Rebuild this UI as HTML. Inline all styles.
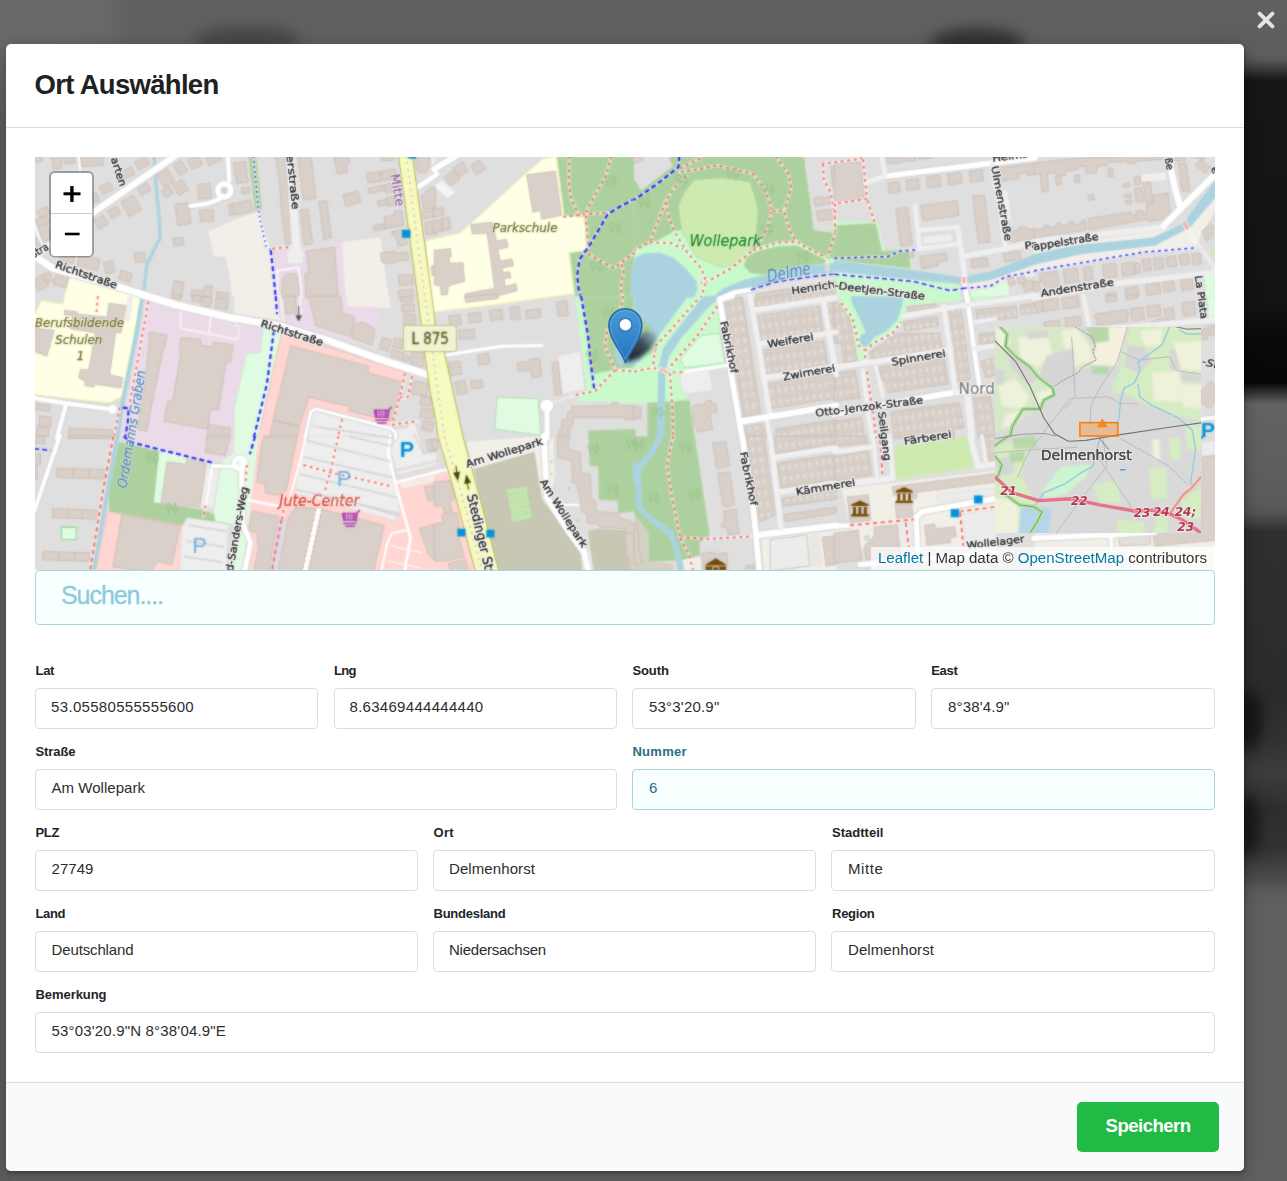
<!DOCTYPE html>
<html lang="de"><head><meta charset="utf-8"><title>Ort Auswählen</title>
<style>
html,body{margin:0;padding:0}
body{width:1287px;height:1181px;overflow:hidden;position:relative;background:#606060;font-family:"Liberation Sans",sans-serif}
.t{margin:0;padding:0;display:block;position:absolute;white-space:pre;font-family:"Liberation Sans",sans-serif}
.modal{position:absolute;left:6px;top:44px;width:1238px;height:1127px;background:#fff;border-radius:5px;box-shadow:1px 3px 3px 0 rgba(0,0,0,.2),1px 3px 15px 2px rgba(0,0,0,.2);overflow:hidden}
.hdr{position:absolute;left:0;top:0;right:0;height:83px;border-bottom:1px solid #dcdddd}
.actions{position:absolute;left:0;right:0;top:1038px;bottom:0;background:#f9fafb;border-top:1px solid #dcdddd}
.map{position:absolute;left:35px;top:157px;width:1180px;height:413px;overflow:hidden;background:#e0dfdf}
.search{position:absolute;left:35px;top:570px;width:1180px;height:55px;box-sizing:border-box;border:1px solid #a9d5de;border-radius:4px;background:#f8ffff}
.in{position:absolute;box-sizing:border-box;border:1px solid #dcdddd;border-radius:4px;background:#fff}
.in.info{border-color:#a9d5de;background:#f8ffff}
.btn{position:absolute;left:1077px;top:1102px;width:142px;height:50px;border-radius:5px;background:#21ba45}
.attr{position:absolute;right:0;bottom:0;height:23px;line-height:22px;padding:0 8px 0 6.8px;background:rgba(255,255,255,.7);font-size:15.07px;color:#333;white-space:nowrap}
.attr .lk{color:#0078a8}
.bgl{position:absolute;left:0;top:0;width:130px;height:120px;background:linear-gradient(90deg,#696969 0,#686868 80%,#606060 100%);-webkit-mask-image:linear-gradient(180deg,#000 0,#000 40%,transparent 100%);mask-image:linear-gradient(180deg,#000 0,#000 40%,transparent 100%)}
.bgl2{position:absolute;left:0;top:40px;width:12px;height:1141px;background:linear-gradient(180deg,rgba(92,92,92,0) 0,#5c5c5c 80px)}
.bgr{position:absolute;left:1200px;top:0;width:87px;height:1181px;background:linear-gradient(180deg,#606060 0,#5e5e5e 4.6%,#565656 5.1%,#161616 6.8%,#131313 26%,#0a0a0a 28.5%,#070707 32.4%,#3a3a3a 33.4%,#636363 34.2%,#5c5c5c 42%,#555 43.4%,#2f2f2d 45%,#2b2b29 59%,#333331 63%,#3c3c3a 65.5%,#2e2e2c 68.5%,#333 72%,#4a4a4a 74.3%,#5c5c5c 75.6%,#606060 77%,#606060 100%)}
.blob{position:absolute;border-radius:50%;filter:blur(7px)}
.cls{position:absolute;left:1254.5px;top:9px}

</style></head>
<body>
<div class="bgl"></div><div class="bgl2"></div>
<div class="bgr"></div>
<div class="blob" style="left:195px;top:26px;width:105px;height:30px;background:#474747"></div>
<div class="blob" style="left:930px;top:28px;width:95px;height:30px;background:#333"></div>
<div class="blob" style="left:1236px;top:690px;width:26px;height:60px;background:#151515"></div>
<div class="blob" style="left:1236px;top:795px;width:24px;height:60px;background:#181818"></div>
<svg class="cls" width="22" height="22" viewBox="0 0 22 22"><path d="M4.6 4.6l12.8 12.8M17.4 4.6L4.6 17.4" stroke="#e4e4e4" stroke-width="3.9" stroke-linecap="round" fill="none"/></svg>

<div class="modal">
<div class="hdr"></div>
<div class="actions"></div>
</div>
<div class="map">
<svg width="1180" height="413" viewBox="0 0 1180 413"><style>
.b{fill:#d9d0c9;stroke:#c6b9ae;stroke-width:.8}
.res{fill:#e0dfdf}
.bb{fill:url(#rows);stroke:#c6b9ae;stroke-width:.8}
.beige{fill:#f2efe9}
.ind{fill:#ebdbe8}
.sch{fill:#ffffe5;stroke:#f3f0a8;stroke-width:1}
.ret{fill:#ffd6d1;stroke:#efb9b3;stroke-width:.8}
.park{fill:#c8facc}
.gr2{fill:#dffce2;stroke:#bfe9c4;stroke-width:.6}
.wood{fill:#add19e}
.grass{fill:#cdebb0}
.brown{fill:#c7c7b4}
.pk{fill:#eeeeee;stroke:#dcd6d6;stroke-width:.6}
.wa{fill:#aad3df}
.st{fill:none;stroke:#aad3df;stroke-linecap:round;stroke-linejoin:round}
.rd{fill:none;stroke:#fff;stroke-linecap:round;stroke-linejoin:round}
.rc{fill:none;stroke:#cfcdcd;stroke-linecap:round;stroke-linejoin:round}
.sv{fill:none;stroke:#f0efef;stroke-linecap:round;stroke-linejoin:round}
.pc{fill:none;stroke:#fff;stroke-opacity:.42;stroke-width:3.6;stroke-linecap:round;stroke-linejoin:round}
.fp{fill:none;stroke:#f46a5d;stroke-width:1.9;stroke-dasharray:2.8 3.8;stroke-linejoin:round}
.cy{fill:none;stroke:#1a1af2;stroke-width:1.5;stroke-dasharray:5 3;stroke-linejoin:round}
.cyd{fill:none;stroke:#2222f5;stroke-width:1.5;stroke-dasharray:1.6 3.4;stroke-linejoin:round}
text{font-family:"DejaVu Sans","Liberation Sans",sans-serif}
.rl{fill:#1c1c1c;stroke:#1c1c1c;stroke-width:.4}
.rl-h{fill:none;stroke:#fff;stroke-width:2.6;stroke-linejoin:round;stroke-opacity:.9}
.wl{fill:#4d80b3;font-style:italic;stroke:#4d80b3;stroke-width:.25}
.wl-h{fill:none;font-style:italic;stroke:#fff;stroke-width:1.8;stroke-opacity:.55;stroke-linejoin:round}
.gl{fill:#0e8517;font-style:italic;stroke:#0e8517;stroke-width:.25}
.gl-h{fill:none;font-style:italic;stroke:#fff;stroke-width:1.8;stroke-opacity:.45;stroke-linejoin:round}
.sl{fill:#6b6b1c;font-style:italic;stroke:#6b6b1c;stroke-width:.25}
.sl-h{fill:none;font-style:italic;stroke:#fff;stroke-width:1.8;stroke-opacity:.55;stroke-linejoin:round}
.shl{fill:#d9453a;font-style:italic;stroke:#d9453a;stroke-width:.3}
.shl-h{fill:none;font-style:italic;stroke:#fff;stroke-width:1.8;stroke-opacity:.5;stroke-linejoin:round}
.pl{fill:#777;stroke:#777;stroke-width:.2}
.pl-h{fill:none;stroke:#fff;stroke-width:2.2;stroke-opacity:.7;stroke-linejoin:round}
.dl{fill:#8d5b93;stroke:#8d5b93;stroke-width:.2}
.dl-h{fill:none;stroke:#fff;stroke-width:1.8;stroke-opacity:.55;stroke-linejoin:round}
.Pk{fill:#0092da;font-family:"Liberation Sans",sans-serif;font-weight:bold}
.yr{fill:#f7fabf;stroke:#a9ad45;stroke-width:.9}
.yd{fill:none;stroke:#c4addb;stroke-width:1.6;stroke-dasharray:1.6 5}
.bus{fill:#0092da}
.brg{fill:#f4b3a8;stroke:#fff;stroke-width:.8}
.gd{fill:#9bd98f}
.tree{fill:none;stroke:#96c085;stroke-width:.9}
</style><defs><filter id="soft" x="0" y="0" width="1180" height="413" filterUnits="userSpaceOnUse" color-interpolation-filters="sRGB"><feGaussianBlur stdDeviation=".8" result="b"/><feComposite in="SourceGraphic" in2="b" operator="arithmetic" k1="0" k2=".4" k3=".6" k4="0"/></filter><filter id="soft2" x="0" y="0" width="1180" height="413" filterUnits="userSpaceOnUse" color-interpolation-filters="sRGB"><feGaussianBlur stdDeviation=".8" result="b"/><feComposite in="SourceGraphic" in2="b" operator="arithmetic" k1="0" k2=".5" k3=".5" k4="0"/></filter><pattern id="rows" width="6.8" height="11" patternUnits="userSpaceOnUse" patternTransform="rotate(-8)"><rect width="6.8" height="11" fill="#d9d0c9"/><path d="M0 0v11M0 0h6.8" stroke="#cbbfb4" stroke-width=".7" fill="none"/><rect x="2.2" y="3.5" width="3" height="3" fill="#e3e0dd"/></pattern></defs>
<g id="L-land" filter="url(#soft)"><polygon class="beige" points="173.3,74.6 200.5,62.2 200.5,140.0 197.4,140.0 194.3,118.1 190.4,99.5 178.7,99.5"/>
<polygon class="sch" points="35.0,119.6 29.5,139.2 28.0,147.0 6.2,143.9 -0.8,158.6 -0.8,237.9 74.6,245.7 87.0,239.5 107.2,139.2 96.3,136.7"/>
<polygon class="ind" points="111.1,139.2 200.5,165.6 200.5,280.6 85.5,280.6 90.1,248.8 96.3,220.8 104.1,178.9"/>
<polygon class="ind" points="93.2,279.2 200.5,279.2 200.5,304.9 177.2,305.6 93.2,286.2"/>
<polygon class="wood" points="83.9,284.7 124.3,294.0 119.7,345.3 169.4,353.0 194.3,364.7 192.7,367.0 152.3,369.4 74.6,354.6 73.0,331.3"/>
<polygon class="gr2" points="124.3,294.0 177.2,306.4 170.9,349.9 118.9,345.3" style="stroke:none"/>
<polygon class="gr2" points="186.5,304.9 200.5,295.5 200.5,367.0 180.3,364.7 178.7,353.0" style="stroke:none"/>
<polygon class="ret" points="73.0,354.6 152.3,369.4 144.5,415.2 59.1,415.2"/>
<polygon class="beige" points="199.2,62.5 223.3,54.7 235.0,91.7 238.1,108.8 240.7,140.0 199.2,140.0"/>
<polygon class="wood" points="213.2,-0.8 221.0,-0.8 227.2,52.1 220.2,54.1"/>
<polygon class="ind" points="240.7,95.1 268.4,91.7 307.2,85.2 310.6,140.6 240.7,140.6"/>
<polygon class="beige" points="307.2,85.2 345.3,80.0 353.8,140.6 310.6,140.6"/>
<polygon class="beige" points="199.2,139.2 241.2,139.2 245.1,163.3 199.2,157.1"/>
<polygon class="ind" points="245.1,139.2 345.3,139.2 343.0,163.3 339.9,191.3 245.1,164.9"/>
<polygon class="beige" points="311.1,139.2 354.6,139.2 355.4,150.9 312.7,149.3"/>
<polygon class="ind" points="199.2,164.9 228.0,171.1 225.6,195.9 211.7,196.7 199.2,248.8"/>
<polygon class="gr2" points="228.0,171.1 246.6,175.0 223.3,281.4 199.2,281.4 199.2,251.9 211.7,196.7 225.6,195.9"/>
<polygon class="ret" points="246.6,175.0 369.4,214.6 358.5,267.4 355.4,281.4 223.3,281.4"/>
<polygon class="ret" points="199.2,279.2 401.2,279.2 401.2,415.2 199.2,415.2" style="stroke:none"/>
<polygon class="gr2" points="199.2,279.2 223.3,279.2 210.9,388.8 207.8,415.2 199.2,415.2" style="stroke:none"/>
<polygon class="beige" points="363.9,326.6 401.2,318.1 401.2,323.8 367.8,331.6"/>
<polygon class="res" points="356.2,265.2 403.6,265.2 403.6,315.0 362.4,325.1 353.8,297.1 355.4,279.2"/>
<polygon class="wood" points="521.2,-0.8 605.1,-0.8 605.1,146.1 540.6,146.1 534.4,95.6 551.5,93.2 549.2,60.6 529.0,61.4 524.3,23.3" style="stroke:#c8facc;stroke-width:1.2"/>
<polygon class="sch" points="390.7,83.9 424.9,76.1 435.7,66.8 490.1,17.1 508.8,1.6 521.2,-0.8 524.3,23.3 529.0,59.4 549.2,60.0 551.5,93.2 533.6,95.6 539.1,136.8 519.7,139.2 465.3,147.0 395.3,155.4"/>
<polygon class="park" points="540.6,139.2 600.5,139.2 600.5,245.7 543.0,244.1 543.7,239.5 551.5,231.7 546.1,191.3"/>
<polygon class="wood" points="546.1,139.2 600.5,139.2 600.5,209.9 581.0,212.3 555.4,217.7 553.1,191.3"/>
<polygon class="wood" points="553.1,273.6 600.5,272.1 600.5,281.4 553.1,281.4"/>
<polygon class="ret" points="399.2,317.3 415.5,315.0 442.0,415.2 399.2,415.2" style="stroke:none"/>
<polygon class="beige" points="431.9,284.7 507.2,279.2 508.8,295.5 518.1,279.2 519.7,318.9 515.0,340.6 536.8,373.2 555.4,395.0 558.5,415.2 546.1,415.2 507.2,342.2 499.5,294.8 438.9,311.9 435.0,300.2"/>
<polygon class="brown" points="438.9,311.9 499.5,294.8 507.2,342.2 533.6,376.3 546.1,398.1 547.6,415.2 463.7,415.2 443.5,335.9"/>
<polygon class="wood" points="553.8,279.2 601.2,279.2 601.2,354.6 583.4,356.1 582.6,343.7 563.9,342.9 563.2,309.5 554.6,308.7"/>
<polygon class="brown" points="553.1,373.2 564.7,371.7 590.4,373.2 595.8,415.2 558.5,415.2"/>
<polygon class="park" points="599.2,-0.8 800.5,-0.8 800.5,140.6 599.2,140.6"/>
<polygon class="wood" points="599.2,21.8 606.2,33.4 637.3,9.3 633.4,-0.8 769.4,-0.8 770.9,15.5 775.6,46.6 778.7,73.0 800.5,76.1 800.5,101.0 791.9,101.8 761.6,84.7 743.0,85.5 724.3,89.4 715.0,96.3 701.0,108.8 683.9,109.6 660.6,99.5 646.6,73.0 638.9,74.6 615.5,87.0 599.2,93.2"/>
<polygon class="wood" points="708.8,108.8 711.9,99.5 724.3,93.2 743.0,89.4 761.6,88.6 775.6,94.8 790.4,102.6 790.4,106.4 755.4,111.1 729.0,118.1 715.0,115.8"/>
<polygon class="res" points="599.2,-0.8 633.4,-0.8 637.3,9.3 606.2,33.4 599.2,21.8"/>
<polygon class="res" points="769.4,-0.8 800.5,-0.8 800.5,76.1 778.7,73.0 775.6,46.6 770.9,15.5"/>
<polygon class="res" points="715.0,132.1 739.9,124.3 770.9,118.1 800.5,115.0 800.5,140.6 699.5,140.6" style="fill:#e6e4e2"/>
<polygon class="park" points="599.2,139.2 687.0,139.2 683.9,175.7 690.1,206.8 651.3,214.6 652.8,239.5 638.9,245.7 599.2,245.7"/>
<polygon class="wood" points="612.4,245.7 654.4,243.3 659.8,281.4 612.4,281.4"/>
<polygon class="wood" points="599.2,279.2 659.8,279.2 674.6,377.9 664.5,385.7 665.3,398.1 649.7,402.8 614.0,405.1 613.2,374.8 599.2,357.7"/>
<polygon class="brown" points="599.2,357.7 613.2,374.8 614.0,405.1 637.3,405.9 638.9,415.2 599.2,415.2" style="fill:#d3d1c4"/>
<polygon class="beige" points="648.2,402.8 665.3,399.7 666.0,415.2 646.6,415.2"/>
<polygon class="beige" points="725.9,381.8 801.2,373.2 801.2,415.2 729.0,415.2"/>
<polygon class="park" points="799.2,65.3 842.7,64.5 849.4,93.2 874.6,91.7 876.9,112.7 799.2,103.8"/>
<polygon class="wood" points="799.2,68.4 840.7,66.0 846.9,94.0 873.8,92.5 875.7,111.6 799.2,102.9"/>
<polygon class="park" points="799.2,114.2 877.7,122.8 924.3,127.4 925.1,140.6 799.2,140.6"/>
<polygon class="beige" points="932.1,127.1 955.4,123.1 1000.5,107.2 1000.5,118.1 974.0,124.3 972.5,132.1 933.6,135.2"/>
<polygon class="gr2" points="935.2,135.2 973.3,125.1 974.8,138.3 935.2,141.4"/>
<polygon class="park" points="804.7,139.2 927.4,139.2 926.7,143.1 871.5,149.3 866.8,168.0 851.3,180.4 832.6,192.8 831.9,204.5 823.3,204.5 820.2,186.6 814.0,163.3 804.7,144.7"/>
<polygon class="park" points="935.2,139.2 960.1,139.2 960.1,142.3 935.5,143.4"/>
<polygon class="beige" points="807.0,332.1 960.8,313.4 960.8,391.9 799.2,391.9 799.2,367.0 814.0,366.2"/>
<polygon class="grass" points="859.1,289.3 933.6,279.2 938.3,311.1 860.6,322.7"/>
<polygon class="beige" points="999.2,88.6 1068.4,81.6 1129.0,73.0 1146.1,67.6 1118.1,80.8 1038.9,88.6 999.2,97.6"/>
<polygon class="beige" points="999.2,107.2 1046.6,97.1 1119.7,88.6 1155.4,69.9 1181.0,39.6 1181.0,52.8 1158.5,91.7 1108.8,94.8 999.2,113.8"/>
<polygon class="gr2" points="1169.4,118.1 1181.0,117.3 1181.0,140.6 1170.9,140.6"/>
<polygon class="grass" points="1174.0,91.7 1181.0,89.4 1181.0,103.3"/>
<polygon class="gr2" points="1172.5,139.2 1181.0,139.2 1181.0,160.2 1173.3,160.5"/>
<polygon class="beige" points="999.2,311.1 1181.0,303.3 1181.0,415.2 999.2,415.2"/></g>
<g id="L-land2" filter="url(#soft)"><polygon class="pk" points="93.4,139.8 97.3,140.4 94.0,163.5 90.2,162.9"/>
<polygon class="pk" points="152.3,360.8 193.5,367.0 191.1,415.2 144.5,415.2 146.9,370.1"/>
<polygon class="pk" points="168.6,308.7 184.9,310.3 178.7,351.5 164.7,349.9"/>
<polygon class="gr2" points="26.4,370.1 41.2,370.4 41.2,382.6 26.4,382.3" style="stroke:#8fd49a;stroke-width:1.1"/>
<polygon class="pk" points="252.1,92.0 268.4,91.4 268.7,106.4 252.5,106.9"/>
<polygon class="pk" points="395.0,-0.8 400.5,-0.8 400.5,7.8 396.1,7.0"/>
<polygon class="pk" points="277.7,251.1 358.5,272.1 357.0,281.4 268.4,281.4 273.0,255.0"/>
<polygon class="pk" points="270.7,279.2 355.4,279.2 360.1,323.5 364.7,354.6 360.1,363.9 259.1,335.9 265.3,303.3"/>
<polygon class="pk" points="360.4,271.8 372.3,270.8 373.9,266.6 380.0,265.4 389.3,297.2 401.9,295.1 402.6,308.1 362.9,318.4 356.2,295.5" style="stroke:#ecc4bf"/>
<polygon class="pk" points="244.3,360.8 252.8,362.1 242.0,415.2 233.4,415.2" style="fill:#dcdce8;stroke:none"/>
<polygon class="pk" points="400.0,27.2 407.0,23.3 421.0,35.0 412.4,41.2 400.0,31.1" style="fill:#f4f3f3"/>
<polygon class="gr2" points="462.2,240.2 503.3,241.8 505.7,278.3 459.8,272.1" style="stroke:#a8dcae;stroke-width:.9"/>
<polygon class="pk" points="522.8,198.3 545.3,194.4 550.0,232.5 527.4,237.1" style="stroke:#e3cfcb"/>
<polygon class="grass" points="471.5,332.8 491.7,329.0 497.1,360.8 477.7,365.5" style="fill:#c4e5ae"/>
<polygon class="grass" points="659.1,23.3 687.0,21.0 715.0,25.6 722.8,51.3 721.2,74.6 715.0,96.3 701.0,108.8 683.9,109.6 660.6,99.5 646.6,73.0 643.5,48.2 649.7,35.7"/>
<polygon class="gr2" points="645.1,202.2 665.3,178.9 684.7,176.1 690.1,206.0 649.7,210.7" style="stroke:#a8dcae;stroke-width:.9"/>
<polygon class="pk" points="644.3,216.1 674.6,213.0 677.7,233.2 652.8,237.1 646.6,233.2" style="stroke:#e3cfcb"/>
<polygon class="pk" points="735.2,382.6 771.7,377.9 774.8,409.0 735.2,414.0" style="fill:#ececec;stroke:#c4bcb6;stroke-width:.9"/>
<polygon class="pk" points="774.0,378.2 784.9,377.1 787.3,409.8 776.4,410.8" style="fill:#e9e7e4;stroke:none"/>
<polygon class="pk" points="965.1,34.0 972.5,33.0 976.7,63.0 969.4,64.0"/>
<polygon class="pk" points="887.5,79.4 916.8,76.3 917.7,84.4 888.3,87.5"/>
<polygon class="pk" points="901.8,337.5 960.8,331.3 960.8,339.8 902.6,344.5" style="fill:#ececec"/>
<polygon class="pk" points="926.7,356.9 960.8,353.0 960.8,387.2 929.8,388.8" style="fill:#ececec"/>
<polygon class="pk" points="860.9,365.2 880.0,363.9 881.1,391.9 863.7,392.7" style="fill:#ececec"/>
<polygon class="pk" points="1097.1,17.9 1131.3,14.8 1132.1,23.3 1107.2,25.6 1105.7,20.2 1097.9,21.0" style="fill:#f0efef"/>
<polygon class="pk" points="1166.3,284.7 1181.0,283.9 1181.0,298.3 1166.6,299.3" style="fill:#ececec"/></g>
<g id="L-water" filter="url(#soft)"><polyline class="st" points="118.9,-1.6 120.4,20.2 124.3,62.2 125.1,80.8 111.9,107.2 108.8,133.6 107.2,141.4" stroke-width="3.42"/>
<polyline class="st" points="107.5,139.2 101.0,178.9 93.2,217.7 87.0,248.8 82.1,281.4" stroke-width="4.04" style="stroke-linecap:butt"/>
<polyline class="st" points="82.4,279.2 73.0,331.3 58.7,415.2" stroke-width="4.04" style="stroke-linecap:butt"/>
<polygon class="wa" points="596.6,108.8 600.5,101.0 600.5,140.6 595.0,140.6"/>
<polygon class="wa" points="578.7,191.3 600.5,191.3 600.5,208.4 583.4,208.4"/>
<polygon class="wa" points="597.4,304.9 601.2,303.3 601.2,328.2 598.1,326.6"/>
<polygon class="wa" points="599.2,101.0 609.3,96.3 624.9,95.6 638.9,101.0 651.3,111.9 661.4,124.3 662.2,133.6 659.1,140.6 599.2,140.6"/>
<polygon class="wa" points="677.7,140.6 687.0,132.1 708.8,122.8 739.9,115.8 770.9,108.8 800.5,105.7 800.5,115.0 770.9,118.1 739.9,124.3 715.0,132.1 699.5,140.6"/>
<polygon class="wa" points="599.2,139.2 652.8,139.2 620.2,183.5 612.4,191.3 606.2,202.2 599.2,208.4"/>
<polygon class="wa" points="668.4,139.2 651.3,160.2 628.0,191.3 623.3,211.5 621.8,281.4 629.5,281.4 630.3,214.6 634.2,199.1 646.6,180.4 674.6,149.3 687.0,139.2"/>
<polyline class="st" points="625.6,279.2 617.1,295.5 603.1,311.1 603.9,348.4 609.3,356.1 635.7,376.3 640.4,388.8 646.9,415.2" stroke-width="6.22" style="stroke-linecap:butt;stroke-linejoin:miter"/>
<polygon class="wa" points="799.2,103.2 876.1,112.7 924.3,120.0 955.4,114.7 1000.5,97.1 1000.5,107.2 955.4,123.1 929.0,127.1 877.7,122.8 799.2,114.2"/>
<polygon class="wa" points="815.5,139.2 868.4,139.2 866.8,149.3 862.2,163.3 851.3,174.2 838.9,180.4 832.6,189.7 827.2,189.7 824.1,183.5 826.4,177.3 831.1,175.7 823.3,158.6 817.1,146.2"/>
<polygon class="wa" points="999.2,97.3 1038.9,88.6 1118.1,80.8 1147.6,66.8 1170.9,35.7 1181.0,22.5 1181.0,39.6 1155.4,69.9 1119.7,88.6 1046.6,97.1 999.2,107.4"/></g>
<g id="L-bldg" filter="url(#soft)"><polygon class="b" points="-1.2,0.3 6.5,-1.0 7.4,4.3 -0.2,5.7"/>
<polygon class="b" points="17.0,-0.4 25.5,-1.1 26.6,11.3 18.0,12.0"/>
<polygon class="b" points="28.4,-0.6 39.3,-1.5 39.9,6.2 29.1,7.1"/>
<polygon class="b" points="45.9,-0.6 67.6,-1.7 68.2,8.4 46.4,9.5"/>
<polygon class="b" points="85.7,14.4 96.2,9.5 99.9,17.3 89.3,22.2"/>
<polygon class="b" points="99.5,5.0 110.7,-0.3 114.4,7.5 103.1,12.7"/>
<polygon class="b" points="64.1,30.0 74.6,25.1 78.3,32.8 67.7,37.7"/>
<polygon class="b" points="54.7,38.0 61.0,35.0 65.0,43.5 58.6,46.4"/>
<polygon class="b" points="102.2,31.3 111.7,25.9 115.9,33.3 106.5,38.7"/>
<polygon class="b" points="86.0,45.0 98.1,38.1 106.7,52.9 94.6,59.8"/>
<polygon class="b" points="72.7,54.3 81.5,49.3 85.8,56.7 77.0,61.7"/>
<polygon class="b" points="58.8,63.6 68.2,58.2 73.3,66.9 63.9,72.4"/>
<polygon class="b" points="122.1,17.5 132.2,11.7 139.6,24.5 129.5,30.3"/>
<polygon class="b" points="138.2,7.8 146.2,3.2 152.4,13.9 144.4,18.6"/>
<polygon class="b" points="126.4,33.9 134.5,29.3 138.4,36.0 130.3,40.7"/>
<polygon class="b" points="137.5,27.6 146.9,22.2 153.1,33.0 143.7,38.4"/>
<polygon class="b" points="152.6,3.3 163.2,-1.6 167.5,7.6 156.9,12.5"/>
<polygon class="b" points="171.1,1.6 183.1,-4.0 186.3,3.1 174.4,8.6"/>
<polygon class="b" points="162.6,27.4 174.9,26.3 176.2,41.0 163.8,42.1"/>
<polygon class="b" points="139.9,47.7 153.0,45.9 155.9,66.7 142.9,68.5"/>
<polygon class="b" points="164.6,53.4 177.8,52.2 178.8,63.8 165.6,65.0"/>
<polygon class="b" points="193.8,47.3 201.5,46.6 202.5,57.4 194.7,58.1"/>
<polygon class="b" points="137.9,81.5 147.9,80.1 149.0,87.8 139.0,89.2"/>
<polygon class="b" points="99.3,96.0 109.4,95.1 110.2,104.7 100.1,105.6"/>
<polygon class="b" points="1.9,54.5 11.3,49.1 15.2,55.8 5.8,61.3"/>
<polygon class="b" points="0.8,63.0 11.4,58.0 14.7,65.1 4.1,70.0"/>
<polygon class="b" points="3.1,69.7 11.8,66.5 17.1,81.1 8.4,84.3"/>
<polygon class="b" points="-3.0,82.2 2.9,80.0 6.1,88.8 0.2,90.9"/>
<polygon class="b" points="44.5,98.2 65.0,102.5 62.7,113.2 42.2,108.8"/>
<polygon class="b" points="68.7,105.6 77.5,103.7 79.9,115.1 71.1,117.0"/>
<polygon class="b" points="86.3,113.1 97.4,116.7 94.5,125.6 83.5,122.0"/>
<polygon class="b" points="25.6,97.1 39.4,99.6 38.1,106.4 24.4,104.0"/>
<polygon class="b" points="-3.1,123.6 7.7,117.4 13.9,128.1 3.2,134.4"/>
<polygon class="b" points="7.8,118.1 13.9,114.6 18.6,122.7 12.5,126.2"/>
<polygon class="b" points="21.8,114.8 33.8,118.0 30.4,130.8 18.4,127.5"/>
<polygon class="b" points="139.0,123.7 149.1,125.1 146.9,140.5 136.9,139.1"/>
<polygon class="b" points="156.5,132.8 167.3,133.7 166.7,140.7 155.9,139.8"/>
<polygon class="b" points="169.6,128.7 177.3,129.3 176.4,140.2 168.6,139.5"/>
<polygon class="b" points="181.7,134.8 193.3,135.8 192.8,141.2 181.2,140.2"/>
<polygon class="b" points="29.5,153.2 42.0,154.8 42.7,157.1 72.3,160.2 73.8,146.2 90.9,148.5 86.2,175.7 80.8,175.4 74.6,217.7 87.8,220.8 86.2,230.9 59.8,227.0 59.1,230.1 49.7,228.6 50.5,224.7 43.5,220.8 45.8,212.3 53.6,213.0 60.6,175.7 35.7,171.9 37.3,158.6 29.5,157.9"/>
<polygon class="b" points="-0.8,171.1 19.4,173.4 11.7,199.1 -0.8,194.4"/>
<polygon class="b" points="114.2,175.0 132.1,178.1 129.8,189.7 129.0,188.2 119.7,233.2 118.9,235.6 111.9,274.4 102.6,272.1 108.8,233.2 114.2,186.6"/>
<polygon class="b" points="146.1,180.4 165.5,182.7 166.3,188.2 177.9,189.7 178.7,185.1 198.1,188.2 195.0,205.3 191.1,205.0 183.4,253.4 175.6,252.7 172.5,272.1 129.0,264.3 132.9,244.1 137.5,244.9 146.1,194.4 144.5,193.6"/>
<polygon class="b" points="174.0,267.4 195.8,271.3 194.3,281.4 171.7,281.4"/>
<polygon class="b" points="34.2,271.3 77.7,272.9 76.9,281.4 33.4,281.4"/>
<polygon class="b" points="137.2,137.3 146.3,138.9 145.7,142.7 136.5,141.1"/>
<polygon class="b" points="157.6,137.7 166.7,139.3 165.7,145.4 156.5,143.8"/>
<polygon class="b" points="167.9,139.3 177.1,140.9 175.5,150.1 166.3,148.4"/>
<polygon class="b" points="181.2,141.3 193.4,143.5 191.8,152.7 179.5,150.5"/>
<polygon class="b" points="1.4,247.1 15.3,248.3 14.8,254.2 0.9,253.0"/>
<polygon class="b" points="4.7,258.8 16.3,259.8 15.5,269.9 3.9,268.8"/>
<polygon class="b" points="2.4,269.3 14.0,270.3 13.2,279.6 1.6,278.6"/>
<polygon class="b" points="172.5,279.2 195.0,279.2 190.4,298.6 170.2,295.5"/>
<polygon class="b" points="132.1,304.9 151.5,307.2 152.0,301.8 171.7,304.1 164.7,349.9 153.8,348.4 153.1,350.7 125.9,346.0"/>
<polygon class="b" points="87.0,357.7 145.3,368.6 136.8,407.4 122.8,404.3 115.0,415.2 77.7,409.8"/>
<polygon class="b" points="33.4,278.8 77.7,279.2 77.4,281.6 33.4,281.2"/>
<polygon class="b" points="21.9,311.0 70.1,312.7 69.8,322.0 21.6,320.3"/>
<polygon class="b" points="17.6,351.6 62.3,353.2 62.0,362.2 17.3,360.6"/>
<polygon class="b" points="7.9,394.3 54.5,395.9 54.2,404.4 7.6,402.8"/>
<polygon class="b" points="-0.8,279.6 10.1,279.6 10.1,286.6 -0.8,286.6"/>
<polygon class="b" points="-2.3,297.1 5.4,297.1 5.4,308.0 -2.3,308.0"/>
<polygon class="b" points="-2.3,309.5 2.3,309.5 2.3,322.0 -2.3,322.0"/>
<polyline class="b" points="37.8,312.2 37.8,320.9"/>
<polyline class="b" points="53.6,312.2 53.6,320.9"/>
<polyline class="b" points="32.6,352.6 32.6,361.3"/>
<polyline class="b" points="47.4,352.6 47.4,361.3"/>
<polyline class="b" points="24.1,395.0 24.1,403.7"/>
<polyline class="b" points="39.6,395.0 39.6,403.7"/>
<polygon class="b" points="240.7,-0.8 250.0,-0.8 252.8,23.3 254.7,51.3 260.3,85.2 251.0,87.8 246.3,52.8 244.3,23.3"/>
<polygon class="b" points="262.9,-0.8 276.1,-0.8 281.1,41.2 268.4,43.2"/>
<polygon class="b" points="265.3,53.1 273.0,52.2 277.7,86.2 269.2,87.8"/>
<polygon class="b" points="283.9,44.8 291.7,43.8 296.3,80.8 288.6,82.1"/>
<polygon class="b" points="298.7,-0.8 314.2,-0.8 315.0,6.2 311.1,7.0 312.2,14.8 302.6,17.1"/>
<polygon class="b" points="349.2,59.8 360.1,58.3 359.3,54.4 366.3,53.6 368.6,68.4 350.0,71.5"/>
<polygon class="b" points="357.0,74.6 367.1,73.0 372.5,87.0 363.2,89.4 360.8,77.7 357.3,78.5"/>
<polygon class="b" points="345.3,96.3 360.1,94.0 360.4,96.3 372.5,94.8 373.7,102.6 360.1,104.4 359.8,106.4 346.9,105.7"/>
<polygon class="b" points="271.5,94.0 299.5,90.1 303.3,140.6 270.7,140.6 269.9,116.6 273.8,115.8"/>
<polygon class="b" points="247.4,122.8 251.3,116.9 260.6,116.6 263.7,122.8 265.3,140.6 246.6,140.6"/>
<polygon class="b" points="386.5,38.9 395.8,30.3 400.5,31.1 400.5,51.3 388.8,52.1"/>
<polygon class="b" points="380.3,-0.8 394.3,-0.8 394.3,9.3 390.4,15.5 384.1,15.5 381.0,10.9"/>
<polygon class="b" points="198.7,6.0 210.2,4.3 213.1,25.1 201.6,26.7"/>
<polygon class="b" points="206.4,30.7 214.2,30.0 214.7,36.2 207.0,36.8"/>
<polygon class="b" points="197.4,46.7 215.7,42.9 218.1,54.3 199.9,58.1"/>
<polygon class="b" points="307.8,38.0 322.9,34.0 325.9,45.3 310.9,49.3"/>
<polygon class="b" points="331.8,16.1 344.9,14.3 346.3,24.3 333.2,26.1"/>
<polygon class="b" points="346.3,14.2 360.1,12.3 361.4,21.5 347.6,23.5"/>
<polygon class="b" points="333.3,31.1 350.1,28.2 351.1,33.5 334.2,36.5"/>
<polygon class="b" points="350.2,27.3 356.3,26.4 357.5,34.9 351.4,35.7"/>
<polygon class="b" points="342.6,43.8 351.9,42.5 352.6,47.9 343.4,49.2"/>
<polygon class="b" points="351.7,40.5 357.9,39.6 359.1,48.1 352.9,49.0"/>
<polygon class="b" points="338.3,68.6 349.8,66.6 350.7,71.9 339.3,73.9"/>
<polygon class="b" points="363.5,118.7 377.5,117.4 378.3,127.5 364.4,128.7"/>
<polygon class="b" points="363.6,133.5 377.6,132.3 378.2,140.0 364.3,141.2"/>
<polygon class="b" points="346.3,-0.5 359.4,-1.7 359.9,3.0 346.7,4.1"/>
<polygon class="b" points="387.8,54.6 400.1,53.5 400.7,60.4 388.4,61.5"/>
<polygon class="b" points="390.2,65.4 400.3,64.5 401.4,76.9 391.3,77.8"/>
<polygon class="b" points="396.2,109.1 402.4,108.5 403.2,117.8 397.0,118.4"/>
<polygon class="b" points="255.9,189.0 333.6,209.2 332.9,216.1 366.3,224.7 357.0,264.3 314.2,254.2 315.0,249.6 273.8,240.2 264.5,269.0 238.1,262.8"/>
<polygon class="b" points="238.1,263.5 264.5,269.8 262.2,281.4 234.2,281.4"/>
<polygon class="b" points="249.7,139.2 260.6,139.2 261.4,156.3 250.5,157.1"/>
<polygon class="b" points="273.8,139.2 305.7,139.2 307.2,155.5 319.7,160.2 315.8,179.6 280.8,168.7 274.6,143.1"/>
<polygon class="b" points="319.7,166.4 329.0,165.6 338.3,171.1 339.9,175.7 336.8,188.2 317.3,181.2"/>
<polygon class="b" points="377.2,194.4 389.6,195.9 388.0,209.9 375.6,208.4"/>
<polygon class="b" points="347.4,180.6 356.4,183.0 353.4,194.2 344.4,191.8"/>
<polygon class="b" points="359.4,181.2 368.6,182.8 367.0,192.0 357.8,190.4"/>
<polygon class="b" points="357.3,192.5 369.3,195.7 367.5,202.5 355.5,199.3"/>
<polygon class="b" points="365.5,140.0 377.9,140.0 377.9,144.7 365.5,144.7"/>
<polygon class="b" points="367.1,147.0 379.5,147.0 379.5,154.8 367.1,154.8"/>
<polygon class="b" points="369.0,157.5 380.7,157.5 380.7,169.1 369.0,169.1"/>
<polygon class="b" points="378.4,223.8 393.7,226.5 391.4,239.5 376.1,236.8"/>
<polygon class="b" points="386.6,238.6 397.3,240.5 395.7,249.7 385.0,247.8"/>
<polygon class="b" points="386.2,250.8 399.2,253.1 397.6,262.3 384.6,260.0"/>
<polygon class="b" points="388.1,263.4 398.9,265.3 397.2,274.5 386.5,272.6"/>
<polygon class="b" points="368.4,198.2 374.5,199.2 373.5,204.6 367.4,203.5"/>
<polygon class="b" points="228.7,279.2 262.2,279.2 251.3,332.8 243.5,338.3 230.3,335.9 229.5,326.6 221.8,325.1 224.9,298.6"/>
<polygon class="b" points="217.1,354.6 243.5,359.3 233.4,415.2 218.6,415.2 224.1,387.2 221.8,386.4 223.3,376.3 213.2,373.2"/>
<polygon class="b" points="253.6,360.8 260.6,349.9 281.6,351.5 267.6,415.2 242.7,415.2"/>
<polygon class="b" points="287.0,352.3 349.2,368.6 338.3,415.2 273.0,415.2"/>
<polygon class="b" points="389.6,329.7 401.2,328.2 401.2,342.2 392.7,343.7"/>
<polygon class="b" points="384.1,371.7 401.2,367.0 401.2,404.3 394.3,398.1"/>
<polygon class="b" points="391.1,283.1 401.2,281.6 401.2,294.0 393.5,294.8"/>
<polygon class="b" points="491.7,17.9 520.4,14.0 526.7,58.3 506.4,62.2 505.7,53.6 497.9,55.2"/>
<polygon class="b" points="435.7,67.6 457.5,65.3 459.8,76.1 461.4,83.9 471.5,82.4 473.0,90.1 462.9,92.5 465.3,104.1 476.9,101.8 478.5,108.8 466.8,111.1 468.4,115.8 474.6,114.7 476.1,120.4 469.2,122.0 469.9,129.8 480.8,126.7 482.4,133.6 465.3,138.3 462.2,140.6 429.5,140.6 430.3,136.8 459.8,131.3 452.1,76.1 437.3,76.9"/>
<polygon class="b" points="399.2,93.2 415.5,91.7 416.3,99.5 414.0,100.2 414.8,106.4 428.0,105.7 429.5,124.3 413.2,129.0 412.4,137.5 406.2,138.3 405.4,129.0 399.2,127.4"/>
<polygon class="b" points="417.7,11.3 427.3,4.6 433.5,13.5 424.0,20.2"/>
<polygon class="b" points="409.2,19.9 418.7,13.2 425.0,22.1 415.4,28.8"/>
<polygon class="b" points="435.6,9.2 444.5,3.0 450.8,11.9 441.9,18.1"/>
<polygon class="b" points="397.4,51.8 408.2,50.8 408.9,58.6 398.0,59.5"/>
<polygon class="b" points="406.5,61.0 414.2,60.3 415.3,72.7 407.5,73.4"/>
<polygon class="b" points="397.2,63.8 406.5,62.9 407.5,74.6 398.2,75.4"/>
<polygon class="wood" points="606.7,164.6 610.9,163.9 616.2,171.6 610.9,178.6 606.7,177.9"/>
<polygon class="b" points="482.4,206.0 494.8,204.5 494.5,202.2 504.9,201.4 506.4,219.3 497.1,220.8 496.0,213.0 483.1,214.3"/>
<polygon class="b" points="536.8,249.6 577.2,248.8 577.5,245.7 582.6,245.7 582.9,248.8 600.5,248.8 600.5,262.8 589.6,262.8 589.3,260.4 538.3,260.4 537.5,269.0 535.2,269.3 534.9,281.4 523.5,281.4 524.3,272.1 526.7,271.8 527.4,262.8 532.1,262.5 532.9,255.0 536.4,254.7"/>
<polygon class="b" points="429.5,140.0 462.2,136.9 462.9,141.6 431.1,145.4"/>
<polygon class="b" points="413.4,159.1 425.0,157.5 426.4,167.5 414.8,169.1"/>
<polygon class="b" points="433.1,156.9 445.4,155.2 446.7,164.4 434.4,166.1"/>
<polygon class="b" points="454.5,153.7 466.8,152.0 468.2,162.0 455.9,163.7"/>
<polygon class="b" points="474.5,150.8 483.8,149.5 485.5,161.8 476.3,163.1"/>
<polygon class="b" points="490.3,153.6 504.9,151.5 506.1,160.0 491.5,162.0"/>
<polygon class="b" points="521.4,145.0 531.4,143.6 533.5,158.3 523.5,159.7"/>
<polygon class="b" points="423.7,173.3 439.2,172.0 440.0,181.3 424.5,182.6"/>
<polygon class="b" points="442.3,198.1 453.0,196.2 454.7,206.2 444.0,208.1"/>
<polygon class="b" points="413.2,205.8 424.7,204.1 426.6,217.2 415.0,218.8"/>
<polygon class="b" points="419.8,225.0 429.7,222.9 432.4,235.9 422.5,238.0"/>
<polygon class="b" points="435.6,224.3 447.2,222.7 448.3,230.4 436.7,232.0"/>
<polygon class="b" points="516.9,205.7 522.8,205.0 526.2,237.5 520.3,238.1"/>
<polygon class="b" points="399.2,325.1 415.5,323.5 419.4,342.2 414.8,343.7 417.1,354.6 409.3,356.1 407.8,348.4 399.2,349.2"/>
<polygon class="b" points="407.0,357.7 421.8,355.4 424.9,373.2 421.8,374.8 429.5,399.7 409.3,404.3 399.2,402.8 399.2,367.0 407.8,366.2"/>
<polygon class="b" points="532.9,279.2 533.6,293.2 545.3,295.5 546.1,315.7 555.4,317.3 556.2,342.2 560.1,343.7 561.6,354.6 583.4,356.1 584.9,360.8 601.2,367.0 601.2,379.5 591.1,376.3 590.4,371.7 564.7,370.1 563.2,367.0 553.1,366.2 551.5,356.1 546.9,354.6 546.1,345.3 541.4,326.6 537.5,325.1 536.8,303.3 522.8,301.0 522.0,279.2"/>
<polygon class="b" points="590.4,374.8 601.2,379.5 601.2,415.2 595.8,415.2 595.0,401.2 591.9,399.7"/>
<polygon class="b" points="413.6,406.7 430.2,402.3 433.0,412.8 416.5,417.2"/>
<polygon class="b" points="396.9,283.1 403.1,283.1 403.1,292.4 396.9,292.4"/>
<polygon class="b" points="721.2,136.8 800.5,124.3 800.5,140.6 721.2,140.6"/>
<polygon class="b" points="596.9,0.5 605.6,-2.7 607.8,3.2 599.0,6.4"/>
<polygon class="b" points="778.7,41.2 784.9,39.6 788.8,41.2 794.3,38.9 795.5,46.6 780.3,49.4"/>
<polygon class="b" points="781.8,54.4 796.1,52.1 797.7,62.2 783.4,64.0"/>
<polygon class="b" points="796.1,9.3 800.5,8.5 800.5,31.1 797.4,29.5"/>
<polygon class="bb" points="689.4,143.1 707.2,140.0 725.9,256.6 708.8,259.7"/>
<polygon class="bb" points="719.7,141.6 786.5,132.2 787.3,140.0 720.4,150.1"/>
<polygon class="bb" points="720.4,159.4 784.1,149.3 788.0,173.4 724.3,184.3"/>
<polygon class="bb" points="725.1,193.6 788.8,183.5 792.7,207.6 729.8,217.7"/>
<polygon class="bb" points="730.5,227.0 801.2,216.1 801.2,241.0 734.4,251.9"/>
<polygon class="bb" points="708.8,269.8 729.0,266.7 731.3,281.4 711.1,281.4"/>
<polygon class="bb" points="740.6,272.1 801.2,262.8 801.2,281.4 742.2,281.4"/>
<polygon class="bb" points="791.9,147.0 801.2,145.9 801.2,176.5 796.6,177.0"/>
<polygon class="b" points="657.5,248.8 669.9,247.2 670.7,244.1 676.1,243.3 676.9,246.4 680.8,247.2 682.4,255.0 674.6,256.6 677.7,272.1 662.2,275.2 661.4,269.0 659.1,268.7 657.8,258.1"/>
<polygon class="b" points="598.4,250.3 606.2,250.3 606.2,261.2 598.4,261.2"/>
<polygon class="bb" points="711.1,279.2 729.0,279.2 740.6,357.7 724.3,364.7"/>
<polygon class="bb" points="738.3,279.2 801.2,279.2 801.2,286.2 740.6,297.1"/>
<polygon class="bb" points="742.2,306.4 801.2,297.1 801.2,322.0 746.1,331.3"/>
<polygon class="bb" points="746.9,341.4 801.2,332.8 801.2,342.2 748.4,349.2"/>
<polygon class="b" points="749.2,357.7 801.2,349.9 801.2,356.1 750.0,364.7"/>
<polygon class="b" points="677.7,286.2 690.9,284.7 694.8,308.7 681.6,311.1"/>
<polygon class="b" points="683.1,316.5 694.8,315.0 699.5,346.8 693.2,349.9 687.8,348.4"/>
<polygon class="b" points="688.6,353.8 701.0,352.3 704.1,376.3 693.2,377.9 692.5,370.9 687.0,370.1 686.7,366.2 690.1,365.5"/>
<polygon class="b" points="666.8,396.6 679.3,395.0 679.6,397.3 691.7,395.8 693.2,415.2 669.2,415.2"/>
<polygon class="b" points="599.2,371.7 603.1,373.2 603.9,395.0 606.2,395.8 606.2,405.9 599.2,406.7"/>
<polygon class="b" points="787.3,380.2 801.2,378.7 801.2,407.4 791.1,409.0"/>
<polygon class="b" points="710.7,409.2 721.4,407.3 722.4,413.4 711.7,415.3"/>
<polygon class="b" points="799.2,7.0 825.6,5.4 829.5,42.0 799.2,44.3"/>
<polygon class="b" points="884.7,99.5 911.1,95.6 912.2,103.3 902.6,105.7 903.3,108.8 887.0,111.9"/>
<polygon class="b" points="965.5,10.9 1000.5,6.2 1000.5,17.1 992.7,18.6 991.9,15.5 983.4,17.1 984.1,21.8 967.1,24.1"/>
<polygon class="b" points="974.8,74.6 983.4,73.0 984.1,70.7 991.1,69.9 991.9,73.0 1000.5,71.5 1000.5,81.6 975.6,84.7"/>
<polygon class="b" points="851.7,-0.9 865.7,-2.1 866.4,5.6 852.4,6.8"/>
<polygon class="b" points="868.2,-0.9 880.5,-2.0 881.0,3.4 868.6,4.5"/>
<polygon class="b" points="883.8,-1.4 896.2,-2.5 896.5,1.4 884.1,2.5"/>
<polygon class="b" points="853.0,26.1 863.7,24.5 865.1,34.5 854.4,36.1"/>
<polygon class="b" points="870.8,23.5 883.2,21.8 884.6,31.8 872.2,33.5"/>
<polygon class="b" points="891.4,20.1 904.5,18.2 906.0,29.0 892.9,30.9"/>
<polygon class="b" points="912.4,17.3 925.4,15.5 927.0,26.2 913.9,28.1"/>
<polygon class="b" points="934.1,14.5 947.2,12.7 948.7,23.4 935.6,25.3"/>
<polygon class="b" points="860.7,51.9 872.3,50.3 877.6,88.0 866.0,89.6"/>
<polygon class="b" points="885.8,48.8 921.9,43.8 924.0,58.4 887.8,63.5"/>
<polygon class="b" points="937.7,39.3 949.3,37.9 955.1,85.0 943.5,86.4"/>
<polygon class="b" points="936.0,102.3 952.2,100.6 953.1,109.1 936.9,110.8"/>
<polygon class="b" points="968.5,96.4 984.6,94.1 985.8,102.6 969.7,104.8"/>
<polygon class="b" points="972.1,121.7 978.0,119.6 980.6,126.9 974.8,129.0"/>
<polygon class="b" points="981.8,121.2 989.1,118.5 991.2,124.4 983.9,127.0"/>
<polygon class="b" points="986.6,127.1 996.4,122.5 1000.4,130.9 990.5,135.5"/>
<polygon class="b" points="873.1,95.7 878.5,94.9 879.2,99.5 873.8,100.3"/>
<polygon class="bb" points="799.2,146.2 804.7,147.0 815.5,163.3 821.8,203.7 809.3,206.0 806.2,186.6 799.2,186.6"/>
<polygon class="bb" points="868.4,164.9 901.8,159.4 903.3,168.7 869.9,174.2"/>
<polygon class="bb" points="835.0,195.2 862.2,176.5 904.1,176.5 907.2,191.3 836.5,202.2"/>
<polygon class="bb" points="911.1,154.0 925.9,151.7 935.2,222.4 920.4,224.7"/>
<polygon class="bb" points="844.3,209.9 908.8,200.6 913.4,227.0 852.8,235.6 851.3,227.0 845.8,220.8"/>
<polygon class="bb" points="799.2,216.1 820.2,213.8 824.9,241.0 799.2,244.1"/>
<polygon class="bb" points="855.9,255.0 924.3,245.7 929.0,270.5 918.1,272.1 919.7,281.4 859.1,281.4"/>
<polygon class="bb" points="799.2,264.3 826.4,260.4 829.5,281.4 799.2,281.4"/>
<polygon class="bb" points="938.3,241.0 955.4,239.5 960.8,281.4 943.0,281.4"/>
<polygon class="bb" points="872.5,149.8 901.1,146.7 901.6,151.4 873.0,154.4"/>
<polygon class="bb" points="940.9,153.1 981.1,148.9 982.3,160.5 942.1,164.7"/>
<polygon class="bb" points="985.3,147.9 1002.3,146.1 1003.2,155.4 986.2,157.2"/>
<polygon class="bb" points="944.0,177.1 961.0,175.3 962.1,185.3 945.1,187.1"/>
<polygon class="bb" points="946.4,204.3 959.9,200.6 964.4,217.2 950.9,220.8"/>
<polygon class="bb" points="799.2,279.2 831.1,279.2 832.6,286.2 799.2,289.3"/>
<polygon class="bb" points="799.2,300.2 833.4,294.0 836.5,318.1 799.2,324.3"/>
<polygon class="bb" points="950.0,279.2 960.8,279.2 960.8,303.3 953.1,304.1"/>
<polygon class="b" points="857.5,329.7 960.8,316.5 960.8,325.1 881.6,335.2 881.6,341.4 877.7,342.2 876.9,335.9 858.3,338.3"/>
<polygon class="b" points="799.2,376.3 823.3,373.2 826.4,402.8 799.2,405.9"/>
<polygon class="b" points="839.6,370.1 862.2,367.8 865.3,398.1 831.1,402.8 829.5,388.8 838.9,379.5"/>
<polygon class="b" points="889.4,368.6 899.5,367.0 900.2,371.7 919.7,370.1 921.2,379.5 915.0,381.0 915.8,385.7 891.7,388.0 890.9,379.5"/>
<polygon class="b" points="812.3,340.1 833.2,337.9 835.9,363.4 815.0,365.6"/>
<polygon class="b" points="860.4,346.7 876.6,345.3 877.9,360.0 861.7,361.4"/>
<polygon class="b" points="999.2,6.2 1015.5,3.9 1038.9,1.6 1068.4,0.0 1099.5,-0.8 1127.4,-0.8 1127.4,2.3 1102.6,3.9 1101.0,6.2 1093.2,7.0 1091.7,3.9 1073.0,5.4 1071.5,8.5 1062.2,9.3 1061.4,15.5 1051.3,16.3 1050.5,9.3 1043.5,9.3 1042.7,12.4 1031.1,14.0 1030.3,18.6 1021.8,19.4 1021.0,15.5 1012.4,16.3 1013.2,34.2 1007.0,35.0 1005.4,17.1 999.2,17.9"/>
<polygon class="b" points="1053.6,61.4 1096.3,55.2 1097.1,59.1 1101.0,58.7 1100.7,54.4 1107.2,53.6 1108.0,57.5 1111.1,57.2 1111.9,39.6 1132.9,35.7 1136.0,60.6 1113.4,64.5 1112.7,62.2 1054.4,73.0"/>
<polygon class="b" points="999.2,73.0 1009.3,71.5 1009.6,68.4 1013.2,68.1 1013.7,70.7 1021.8,69.6 1022.1,66.5 1025.6,66.2 1026.1,69.2 1034.2,68.1 1034.5,65.0 1038.1,64.6 1038.5,67.6 1046.6,66.5 1046.9,63.4 1050.5,63.1 1051.3,73.0 999.2,80.8"/>
<polygon class="b" points="1167.1,73.8 1175.6,66.8 1179.5,71.5 1177.2,74.6 1178.7,77.7 1171.7,84.7"/>
<polygon class="b" points="1004.7,116.6 1022.5,114.2 1024.1,129.0 1009.3,131.3 1009.0,124.3 1005.4,125.1"/>
<polygon class="b" points="1020.4,19.0 1025.0,18.4 1026.3,27.6 1021.7,28.3"/>
<polygon class="b" points="1039.4,18.2 1044.0,17.6 1045.1,25.3 1040.5,25.9"/>
<polygon class="b" points="1073.0,11.5 1077.6,11.1 1078.4,19.6 1073.7,20.0"/>
<polygon class="b" points="1053.1,38.2 1058.5,37.3 1059.4,42.6 1054.0,43.6"/>
<polygon class="b" points="1088.1,27.2 1094.2,26.3 1094.7,29.4 1088.5,30.3"/>
<polygon class="b" points="1089.6,37.6 1095.8,36.7 1096.2,40.1 1090.1,41.0"/>
<polygon class="b" points="1090.4,43.8 1096.5,42.9 1097.0,46.3 1090.9,47.2"/>
<polygon class="b" points="1098.9,19.5 1105.0,18.6 1106.2,27.1 1100.1,28.0"/>
<polygon class="b" points="1099.7,31.6 1106.6,30.7 1108.6,44.5 1101.6,45.5"/>
<polygon class="b" points="1108.2,25.8 1115.1,24.9 1118.1,45.6 1111.1,46.6"/>
<polygon class="b" points="1143.4,6.9 1151.1,5.8 1155.0,33.5 1147.3,34.6"/>
<polygon class="b" points="1165.6,2.4 1175.1,10.3 1170.1,16.3 1160.6,8.3"/>
<polygon class="b" points="1140.4,-0.1 1149.6,-1.4 1150.2,3.2 1141.0,4.5"/>
<polygon class="b" points="1161.1,-4.6 1169.9,-1.4 1168.3,3.0 1159.5,-0.2"/>
<polygon class="b" points="1028.2,113.3 1042.1,111.4 1043.9,124.4 1030.0,126.4"/>
<polygon class="b" points="1048.0,110.6 1056.5,109.4 1058.3,122.5 1049.8,123.7"/>
<polygon class="b" points="1067.4,107.7 1080.5,105.9 1082.4,119.8 1069.3,121.6"/>
<polygon class="b" points="1086.2,106.9 1098.5,105.2 1100.3,117.5 1087.9,119.2"/>
<polygon class="b" points="1099.6,106.8 1104.2,106.2 1105.5,115.4 1100.9,116.1"/>
<polygon class="b" points="1107.2,102.8 1114.9,101.7 1116.5,113.2 1108.9,114.3"/>
<polygon class="b" points="1118.2,101.7 1127.4,100.4 1128.9,111.2 1119.7,112.5"/>
<polygon class="b" points="1131.1,100.1 1140.4,98.8 1141.8,108.8 1132.5,110.1"/>
<polygon class="b" points="1144.2,98.2 1153.4,96.9 1154.8,106.9 1145.6,108.2"/>
<polygon class="b" points="1156.6,97.0 1165.1,95.8 1166.6,106.6 1158.1,107.8"/>
<polygon class="b" points="997.8,124.8 1004.0,123.9 1005.3,133.2 999.1,134.0"/>
<polygon class="b" points="1090.3,131.4 1102.6,129.7 1103.9,138.9 1091.6,140.7"/>
<polygon class="b" points="1110.4,127.7 1124.3,125.7 1125.8,136.5 1111.9,138.4"/>
<polygon class="b" points="1127.9,125.0 1138.6,123.5 1140.0,133.5 1129.3,135.1"/>
<polygon class="b" points="1145.5,122.9 1157.0,121.2 1158.5,132.0 1147.0,133.6"/>
<polygon class="b" points="1071.1,136.7 1080.3,135.4 1081.2,141.5 1072.0,142.8"/>
<polygon class="b" points="1059.8,157.1 1091.7,152.4 1093.2,155.5 1092.5,164.9 1062.2,168.0"/>
<polygon class="b" points="1000.1,144.5 1007.8,143.4 1009.3,154.2 1001.6,155.3"/>
<polygon class="b" points="1007.0,143.1 1022.4,140.9 1024.0,152.5 1008.7,154.6"/>
<polygon class="b" points="1026.9,141.2 1043.1,138.9 1044.6,149.7 1028.4,152.0"/>
<polygon class="b" points="1029.7,161.3 1045.1,159.2 1046.4,168.4 1031.0,170.6"/>
<polygon class="b" points="1008.9,165.2 1024.2,163.0 1025.3,170.7 1009.9,172.9"/>
<polygon class="b" points="1070.3,139.2 1081.1,137.7 1082.0,143.9 1071.2,145.4"/>
<polygon class="b" points="1090.7,138.8 1101.5,137.3 1102.0,141.2 1091.2,142.7"/>
<polygon class="b" points="1095.5,151.8 1107.9,150.1 1109.6,162.4 1097.3,164.1"/>
<polygon class="b" points="1111.6,149.5 1124.7,147.7 1126.2,158.5 1113.1,160.3"/>
<polygon class="b" points="1129.0,152.0 1138.2,150.7 1139.8,162.2 1130.6,163.5"/>
<polygon class="b" points="1146.8,146.0 1159.1,144.2 1160.9,157.3 1148.6,159.1"/>
<polygon class="b" points="1115.9,164.8 1127.5,160.6 1129.7,166.4 1118.0,170.7"/>
<polygon class="b" points="1175.3,224.1 1188.4,235.1 1174.4,251.7 1161.3,240.7"/>
<polygon class="b" points="1166.3,172.2 1170.9,171.6 1172.5,182.4 1167.8,183.0"/>
<polygon class="b" points="1172.7,169.3 1180.4,168.3 1181.7,177.5 1174.0,178.6"/>
<polygon class="b" points="1118.1,376.7 1166.3,373.2 1167.1,300.2 1181.0,298.6 1181.0,383.3 1119.7,389.1"/>
<polygon class="b" points="1083.9,379.5 1115.0,377.6 1115.8,387.2 1084.7,388.8" style="fill:#e4dfda"/></g>
<g id="L-roadcase" filter="url(#soft)"><polyline class="rc" points="140.6,-1.6 58.3,55.5 14.8,88.6 -3.1,101.0" stroke-width="8.04"/>
<polyline class="rc" points="-3.1,97.6 17.9,111.1 80.0,128.7 107.2,137.5 139.9,147.6" stroke-width="8.66"/>
<polyline class="rc" points="192.7,-1.6 194.3,23.3" stroke-width="5.86"/>
<polyline class="rc" points="184.9,42.0 172.5,46.6 155.4,49.0" stroke-width="5.86"/>
<circle class="rc" cx="189.3" cy="33.4" r="9.9"/>
<polyline class="rc" points="107.2,137.5 139.9,147.6 200.5,161.8" stroke-width="8.66"/>
<polyline class="rc" points="-0.8,241.0 31.1,246.4 76.1,252.2" stroke-width="5.86"/>
<polyline class="rc" points="31.1,247.2 21.8,281.4" stroke-width="5.55"/>
<polyline class="rc" points="177.2,308.9 201.2,309.5" stroke-width="5.24"/>
<polyline class="rc" points="24.9,278.8 -1.2,355.4" stroke-width="5.40"/>
<polyline class="rc" points="402.0,17.1 381.8,31.1" stroke-width="6.48"/>
<polyline class="rc" points="199.2,161.0 246.6,169.5 293.2,183.5 339.9,200.6 392.7,217.7" stroke-width="8.66"/>
<polyline class="rc" points="269.9,281.4 276.1,254.2 280.8,251.9 355.4,271.3 360.1,275.2 360.8,281.4" stroke-width="4.62"/>
<circle class="rc" cx="204.7" cy="306.4" r="8.2"/>
<polyline class="rc" points="206.2,311.1 207.8,367.0 215.5,385.7 209.3,415.2" stroke-width="6.48"/>
<polyline class="rc" points="399.2,12.1 421.0,-1.2" stroke-width="7.42"/>
<polyline class="rc" points="511.9,248.8 512.2,281.4" stroke-width="6.48"/>
<circle class="rc" cx="511.9" cy="248.8" r="6.8"/>
<polyline class="rc" points="508.8,278.8 509.6,295.5 511.9,340.6 535.2,376.3 549.2,395.0 553.5,415.2" stroke-width="7.42"/>
<polyline class="rc" points="683.9,142.2 699.5,135.5 715.8,132.6" stroke-width="5.86"/>
<polyline class="rc" points="697.1,138.8 684.7,142.3 687.0,157.1 696.3,217.7 707.2,281.4" stroke-width="7.11"/>
<polyline class="rc" points="707.2,264.3 801.2,248.8" stroke-width="7.73"/>
<polyline class="rc" points="707.2,279.2 718.1,349.9 724.6,415.2" stroke-width="7.11"/>
<polyline class="rc" points="721.2,378.2 801.2,368.6" stroke-width="7.73"/>
<polyline class="rc" points="848.2,19.4 953.8,6.5 1000.5,0.8" stroke-width="7.11"/>
<polyline class="rc" points="929.3,124.3 932.1,141.4" stroke-width="6.17"/>
<polyline class="rc" points="932.1,139.2 938.3,186.6 944.5,229.4" stroke-width="6.17"/>
<polyline class="rc" points="799.2,256.9 877.7,242.6 921.2,235.1 960.8,229.8" stroke-width="7.73"/>
<polyline class="rc" points="961.6,341.4 887.0,354.6 881.1,360.8 882.7,393.4" stroke-width="7.11"/>
<polyline class="rc" points="798.8,369.4 814.3,368.6" stroke-width="6.48"/>
<polyline class="rc" points="824.9,407.7 961.6,395.3" stroke-width="6.48"/>
<polyline class="rc" points="1135.2,8.5 1139.9,31.1 1145.3,49.7" stroke-width="8.04"/>
<polyline class="rc" points="1129.0,68.4 1146.1,51.3 1181.8,15.5" stroke-width="8.04"/>
<polyline class="rc" points="1166.0,262.0 1181.0,260.4" stroke-width="5.24"/>
<polyline class="rc" points="998.8,381.3 1074.6,377.9 1119.7,375.1" stroke-width="6.79"/>
<polyline class="rc" points="1076.1,377.1 1077.2,415.2" stroke-width="5.55"/></g>
<g id="L-road" filter="url(#soft)"><polyline class="rd" points="140.6,-1.6 58.3,55.5 14.8,88.6 -3.1,101.0" stroke-width="6.84"/>
<polyline class="rd" points="-3.1,97.6 17.9,111.1 80.0,128.7 107.2,137.5 139.9,147.6" stroke-width="7.46"/>
<polyline class="rd" points="192.7,-1.6 194.3,23.3" stroke-width="4.66"/>
<polyline class="rd" points="184.9,42.0 172.5,46.6 155.4,49.0" stroke-width="4.66"/>
<circle class="rd" cx="189.3" cy="33.4" r="9.3" style="fill:#fff;stroke:none"/>
<circle class="res" cx="189.3" cy="33.4" r="3.7" style="fill:#d4d4d4"/>
<polyline class="rd" points="43.8,-0.8 45.1,14.0" stroke-width="1.86"/>
<polyline class="rd" points="0.0,68.4 3.9,80.8 9.3,91.7" stroke-width="1.55"/>
<polyline class="rd" points="107.2,137.5 139.9,147.6 200.5,161.8" stroke-width="7.46"/>
<polyline class="rd" points="-0.8,241.0 31.1,246.4 76.1,252.2" stroke-width="4.66"/>
<circle class="rd" cx="77.7" cy="252.2" r="4.2" style="fill:#fff;stroke:none"/>
<polyline class="rd" points="31.1,247.2 21.8,281.4" stroke-width="4.35"/>
<polyline class="rd" points="146.1,154.8 145.3,171.1 200.5,182.3" stroke-width="2.18" style="stroke:#f3f1f1"/>
<polyline class="rd" points="175.6,160.2 174.0,176.5" stroke-width="2.18" style="stroke:#f3f1f1"/>
<polyline class="rd" points="177.2,309.5 170.9,349.9" stroke-width="1.86"/>
<polyline class="rd" points="177.2,308.9 201.2,309.5" stroke-width="4.04"/>
<polyline class="rd" points="24.9,278.8 -1.2,355.4" stroke-width="4.20"/>
<polyline class="sv" points="255.2,-1.6 258.3,51.3 261.4,94.8" stroke-width="7.77" style="stroke-linecap:butt"/>
<circle class="sv" cx="260.9" cy="98.7" r="6.5" style="fill:#f0efef;stroke:none"/>
<polyline class="rd" points="242.7,140.6 242.3,113.4 263.7,110.6 266.8,140.6" stroke-width="1.55"/>
<polyline class="rd" points="402.0,17.1 381.8,31.1" stroke-width="5.28"/>
<polyline class="rd" points="199.2,161.0 246.6,169.5 293.2,183.5 339.9,200.6 392.7,217.7" stroke-width="7.46"/>
<polyline class="sv" points="245.1,139.2 248.2,163.3" stroke-width="2.49"/>
<polyline class="sv" points="264.5,139.2 266.0,157.1" stroke-width="2.49"/>
<polyline class="rd" points="199.2,168.0 204.7,169.5 203.1,182.0 199.2,181.2" stroke-width="1.55" style="stroke:#f3f1f1"/>
<polyline class="rd" points="269.9,281.4 276.1,254.2 280.8,251.9 355.4,271.3 360.1,275.2 360.8,281.4" stroke-width="3.42"/>
<circle class="rd" cx="204.7" cy="306.4" r="7.8" style="fill:#fff;stroke:none"/>
<circle class="res" cx="203.4" cy="306.4" r="2.8" style="fill:#dffce2"/>
<polyline class="rd" points="206.2,311.1 207.8,367.0 215.5,385.7 209.3,415.2" stroke-width="5.28"/>
<polyline class="rd" points="270.7,279.2 265.3,303.3 254.4,342.2" stroke-width="2.18"/>
<polyline class="rd" points="355.4,279.2 353.1,297.1 361.6,331.3 375.6,381.0 369.4,415.2" stroke-width="2.80"/>
<polyline class="rd" points="211.7,342.9 243.5,349.2" stroke-width="2.80"/>
<polyline class="rd" points="361.6,325.1 401.2,315.4" stroke-width="2.80"/>
<polyline class="rd" points="370.9,373.2 357.0,376.3 352.3,385.7 346.1,415.2" stroke-width="2.18"/>
<polyline class="rd" points="355.4,388.8 386.5,395.8" stroke-width="1.09"/>
<polyline class="rd" points="353.1,404.3 386.5,411.3" stroke-width="1.09"/>
<polyline class="rd" points="283.9,351.8 269.9,415.2" stroke-width="5.28" style="stroke-linecap:butt"/>
<polyline class="rd" points="281.1,351.8 267.1,415.2" stroke-width="0.78" style="stroke:#aaa;stroke-dasharray:3 2.2;stroke-linecap:butt"/>
<polyline class="rd" points="286.7,352.4 272.7,415.2" stroke-width="0.78" style="stroke:#aaa;stroke-dasharray:3 2.2;stroke-linecap:butt"/>
<polyline class="rd" points="399.2,12.1 421.0,-1.2" stroke-width="6.22"/>
<polyline class="rd" points="409.3,198.3 465.3,189.4 507.2,188.5" stroke-width="3.11"/>
<polyline class="rd" points="511.9,248.8 512.2,281.4" stroke-width="5.28"/>
<circle class="rd" cx="511.9" cy="248.8" r="6.4" style="fill:#fff;stroke:none"/>
<polyline class="sv" points="518.1,245.7 536.8,239.5" stroke-width="1.55"/>
<polyline class="rd" points="508.8,278.8 509.6,295.5 511.9,340.6 535.2,376.3 549.2,395.0 553.5,415.2" stroke-width="6.22"/>
<polyline class="rd" points="399.2,315.1 414.8,312.2" stroke-width="2.80"/>
<polyline class="rd" points="524.3,348.4 543.0,347.6" stroke-width="2.18"/>
<polyline class="rd" points="683.9,142.2 699.5,135.5 715.8,132.6" stroke-width="4.66"/>
<polyline class="rd" points="697.1,138.8 684.7,142.3 687.0,157.1 696.3,217.7 707.2,281.4" stroke-width="5.91"/>
<polyline class="rd" points="692.0,208.4 651.3,214.6" stroke-width="3.42"/>
<polyline class="sv" points="715.0,139.2 724.3,191.3 735.2,259.7" stroke-width="5.28" style="stroke:#f1f0f0"/>
<polyline class="sv" points="718.9,153.2 800.5,140.3" stroke-width="5.28" style="stroke:#f1f0f0"/>
<polyline class="sv" points="724.3,186.6 791.1,176.5 801.2,175.0" stroke-width="5.28" style="stroke:#f1f0f0"/>
<polyline class="sv" points="729.0,220.8 801.2,209.2" stroke-width="5.28" style="stroke:#f1f0f0"/>
<polyline class="sv" points="788.8,144.7 794.3,177.3 801.2,217.7" stroke-width="5.28" style="stroke:#f1f0f0"/>
<polyline class="sv" points="731.3,261.2 735.2,281.4" stroke-width="4.35" style="stroke:#f1f0f0"/>
<polyline class="rd" points="707.2,264.3 801.2,248.8" stroke-width="6.53"/>
<polyline class="rd" points="707.2,279.2 718.1,349.9 724.6,415.2" stroke-width="5.91"/>
<polyline class="rd" points="721.2,378.2 801.2,368.6" stroke-width="6.53"/>
<polyline class="sv" points="735.2,279.2 746.1,371.7" stroke-width="4.97" style="stroke:#f1f0f0"/>
<polyline class="sv" points="739.9,300.2 801.2,290.9" stroke-width="4.97" style="stroke:#f1f0f0"/>
<polyline class="sv" points="746.1,334.7 801.2,326.3" stroke-width="4.97" style="stroke:#f1f0f0"/>
<polyline class="rd" points="848.2,19.4 953.8,6.5 1000.5,0.8" stroke-width="5.91"/>
<polyline class="sv" points="831.1,25.6 848.2,19.9" stroke-width="5.28"/>
<polyline class="sv" points="846.6,-0.8 850.0,18.6" stroke-width="4.66"/>
<polyline class="sv" points="957.3,7.0 964.7,51.3 970.9,93.2" stroke-width="4.66"/>
<polyline class="sv" points="927.4,99.5 970.9,91.7 1000.5,84.7" stroke-width="5.28"/>
<polyline class="sv" points="923.1,73.0 929.8,118.9" stroke-width="5.28"/>
<polyline class="sv" points="880.0,48.5 884.7,91.7 921.2,87.0" stroke-width="4.66"/>
<polyline class="sv" points="886.2,73.0 922.8,70.2" stroke-width="4.66"/>
<polyline class="rd" points="929.3,124.3 932.1,141.4" stroke-width="4.97"/>
<polyline class="rd" points="932.1,139.2 938.3,186.6 944.5,229.4" stroke-width="4.97"/>
<polyline class="rd" points="799.2,256.9 877.7,242.6 921.2,235.1 960.8,229.8" stroke-width="6.53"/>
<polyline class="sv" points="868.4,159.0 929.0,148.5 1001.2,138.8" stroke-width="4.97" style="stroke:#f1f0f0"/>
<polyline class="sv" points="908.8,149.3 915.0,191.3 920.4,234.8" stroke-width="5.28" style="stroke:#f1f0f0"/>
<polyline class="sv" points="799.2,210.7 855.9,202.2 915.8,192.5" stroke-width="5.28" style="stroke:#f1f0f0"/>
<polyline class="sv" points="827.7,213.0 833.4,258.1 837.3,281.4" stroke-width="4.04" style="stroke:#f1f0f0"/>
<polyline class="sv" points="840.7,209.9 845.1,227.0 848.2,241.0" stroke-width="3.42" style="stroke:#f1f0f0"/>
<polyline class="sv" points="938.3,192.1 960.8,188.5" stroke-width="4.66" style="stroke:#f1f0f0"/>
<polyline class="sv" points="940.6,164.9 960.8,161.8" stroke-width="4.04" style="stroke:#f1f0f0"/>
<polyline class="sv" points="932.9,239.5 936.8,281.4" stroke-width="6.22" style="stroke:#f1f0f0"/>
<polyline class="sv" points="838.1,279.2 842.0,318.9" stroke-width="3.73" style="stroke:#f1f0f0"/>
<polyline class="sv" points="854.4,279.2 857.8,320.7" stroke-width="4.66" style="stroke:#f1f0f0"/>
<polyline class="sv" points="799.2,295.1 835.7,290.1" stroke-width="4.35" style="stroke:#f1f0f0"/>
<polyline class="sv" points="799.2,328.5 857.8,321.2" stroke-width="5.59" style="stroke:#f1f0f0"/>
<polyline class="sv" points="935.2,279.2 943.0,309.5 960.8,307.4" stroke-width="5.59" style="stroke:#f1f0f0"/>
<polyline class="sv" points="946.9,279.2 951.0,303.3" stroke-width="3.73" style="stroke:#f1f0f0"/>
<polyline class="rd" points="961.6,341.4 887.0,354.6 881.1,360.8 882.7,393.4" stroke-width="5.91"/>
<polyline class="rd" points="798.8,369.4 814.3,368.6" stroke-width="5.28"/>
<polyline class="rd" points="824.9,407.7 961.6,395.3" stroke-width="5.28"/>
<polyline class="sv" points="999.2,85.0 1065.3,77.7 1129.0,70.2" stroke-width="5.91"/>
<polyline class="rd" points="1135.2,8.5 1139.9,31.1 1145.3,49.7" stroke-width="6.84"/>
<polyline class="rd" points="1129.0,68.4 1146.1,51.3 1181.8,15.5" stroke-width="6.84"/>
<polyline class="sv" points="999.2,141.1 1080.8,126.7 1181.0,115.3" stroke-width="5.28"/>
<polyline class="sv" points="1153.1,73.0 1181.0,112.7" stroke-width="4.66" style="stroke:#f6f6f6;stroke-dasharray:1.2 1.2;stroke-linecap:butt"/>
<polyline class="sv" points="1181.0,162.5 1093.2,170.3 999.2,177.3" stroke-width="5.28"/>
<polyline class="sv" points="1048.5,139.2 1054.4,170.3" stroke-width="4.97"/>
<polyline class="rd" points="1166.0,262.0 1181.0,260.4" stroke-width="4.04"/>
<polyline class="rd" points="998.8,381.3 1074.6,377.9 1119.7,375.1" stroke-width="5.59"/>
<polyline class="rd" points="1076.1,377.1 1077.2,415.2" stroke-width="4.35"/>
<polyline class="sv" points="999.2,404.3 1181.0,391.9" stroke-width="6.22" style="stroke:#f4f3f2"/>
<polygon class="yr" points="363.5,-1.0 382.8,140.0 390.4,202.2 395.0,233.2 401.0,264.3 403.1,280.0 417.1,326.6 440.7,415.2 464.0,415.2 443.5,335.9 428.1,280.0 409.5,196.0 400.6,171.0 397.0,140.0 377.5,-1.0"/>
<polyline class="yd" points="371.4,-1.0 389.9,140.0 394.3,168.0 400.0,213.5 409.6,280.5 424.9,331.3 447.4,415.2"/></g>
<g id="L-path" filter="url(#soft)"><polyline class="pc" points="62.9,139.2 61.4,157.1"/>
<polyline class="fp" points="62.9,139.2 61.4,157.1"/>
<polyline class="pc" points="113.4,144.7 107.2,178.9 99.5,220.8 94.8,245.7"/>
<polyline class="fp" points="113.4,144.7 107.2,178.9 99.5,220.8 94.8,245.7"/>
<polyline class="pc" points="84.7,250.3 83.9,255.0 78.5,281.4"/>
<polyline class="fp" points="84.7,250.3 83.9,255.0 78.5,281.4"/>
<polyline class="cy" points="87.8,250.6 93.6,251.3 92.9,264.3 90.1,281.4" style="stroke-width:2.1"/>
<polyline class="pc" points="78.5,279.2 68.4,331.3 54.9,415.2"/><polyline class="fp" points="78.5,279.2 68.4,331.3 54.9,415.2" style="stroke-dasharray:4.5 3.2"/>
<polyline class="pc" points="170.6,348.4 168.6,359.3"/>
<polyline class="fp" points="170.6,348.4 168.6,359.3"/>
<polyline class="cy" points="-0.8,291.7 15.5,293.4" style="stroke-width:1.6"/>
<polyline class="pc" points="88.6,279.2 96.3,285.4 177.2,305.6"/>
<polyline class="cy" points="88.6,279.2 96.3,285.4 177.2,305.6" style="stroke-width:2.1"/>
<polyline class="pc" points="218.3,-0.8 223.3,51.3 224.9,62.2 231.1,89.4 235.4,92.9"/>
<polyline class="cyd" points="218.3,-0.8 223.3,51.3 224.9,62.2 231.1,89.4 235.4,92.9"/>
<polyline class="pc" points="235.7,93.2 238.5,118.1 240.7,140.6"/>
<polyline class="cy" points="235.7,93.2 238.5,118.1 240.7,140.6" style="stroke-width:2.1"/>
<polyline class="pc" points="237.3,91.7 257.5,89.8"/>
<polyline class="fp" points="237.3,91.7 257.5,89.8"/>
<polyline class="pc" points="240.7,139.2 242.0,157.1"/>
<polyline class="cy" points="240.7,139.2 242.0,157.1" style="stroke-width:2.1"/>
<polyline class="pc" points="238.9,173.4 231.9,227.0 218.6,281.4"/>
<polyline class="cy" points="238.9,173.4 231.9,227.0 218.6,281.4" style="stroke-width:2.1"/>
<polyline class="pc" points="370.2,216.1 364.7,239.5 357.0,267.4"/>
<polyline class="fp" points="370.2,216.1 364.7,239.5 357.0,267.4"/>
<polyline class="pc" points="377.2,219.3 372.5,241.0"/>
<polyline class="fp" points="377.2,219.3 372.5,241.0"/>
<polyline class="pc" points="364.7,239.8 369.1,241.3"/>
<polyline class="fp" points="364.7,239.8 369.1,241.3"/>
<polyline class="pc" points="307.2,262.0 302.6,281.4"/>
<polyline class="fp" points="307.2,262.0 302.6,281.4"/>
<polyline class="pc" points="357.0,267.7 381.8,264.3"/>
<polyline class="fp" points="357.0,267.7 381.8,264.3"/>
<polyline class="cy" points="220.2,279.2 214.8,297.1" style="stroke-width:2.1"/>
<polyline class="pc" points="211.7,308.0 210.9,326.6"/>
<polyline class="fp" points="211.7,308.0 210.9,326.6"/>
<polyline class="pc" points="303.3,279.2 296.3,311.1 289.4,335.9"/>
<polyline class="fp" points="303.3,279.2 296.3,311.1 289.4,335.9"/>
<polyline class="pc" points="268.4,308.0 296.3,315.7 358.5,329.7"/>
<polyline class="fp" points="268.4,308.0 296.3,315.7 358.5,329.7"/>
<polyline class="pc" points="248.5,353.0 246.6,362.4"/>
<polyline class="fp" points="248.5,353.0 246.6,362.4"/>
<polyline class="fp" points="246.6,362.4 236.5,415.2" style="stroke-dasharray:4.5 3.2"/>
<polyline class="pc" points="534.4,-0.8 533.6,24.9 536.8,43.5 543.0,55.9 546.1,58.3"/>
<polyline class="fp" points="534.4,-0.8 533.6,24.9 536.8,43.5 543.0,55.9 546.1,58.3"/>
<polyline class="pc" points="576.4,-0.8 570.9,18.6 555.4,46.6 550.0,58.3"/>
<polyline class="fp" points="576.4,-0.8 570.9,18.6 555.4,46.6 550.0,58.3"/>
<polyline class="pc" points="528.2,59.8 550.7,57.2 572.5,55.9"/>
<polyline class="fp" points="528.2,59.8 550.7,57.2 572.5,55.9"/>
<polyline class="pc" points="550.7,58.3 552.3,77.7 553.8,88.6"/>
<polyline class="fp" points="550.7,58.3 552.3,77.7 553.8,88.6"/>
<polyline class="pc" points="553.1,97.1 578.7,111.1 600.5,95.1"/>
<polyline class="fp" points="553.1,97.1 578.7,111.1 600.5,95.1"/>
<polyline class="pc" points="586.5,107.2 588.8,115.0 585.7,129.0 587.3,140.6"/>
<polyline class="fp" points="586.5,107.2 588.8,115.0 585.7,129.0 587.3,140.6"/>
<polyline class="pc" points="600.5,41.3 583.4,50.5 572.5,57.5 566.3,68.4 555.4,87.0 544.5,102.6 542.2,118.1 543.7,132.1 546.1,140.6"/>
<polyline class="cy" points="600.5,41.3 583.4,50.5 572.5,57.5 566.3,68.4 555.4,87.0 544.5,102.6 542.2,118.1 543.7,132.1 546.1,140.6" style="stroke-width:2.1"/>
<polyline class="pc" points="546.1,139.2 553.1,178.9 555.4,202.2 559.3,233.2"/>
<polyline class="cy" points="546.1,139.2 553.1,178.9 555.4,202.2 559.3,233.2" style="stroke-width:2.1"/>
<polyline class="pc" points="588.0,139.2 586.5,149.3 572.5,171.1 570.2,189.7 580.3,213.0"/>
<polyline class="fp" points="588.0,139.2 586.5,149.3 572.5,171.1 570.2,189.7 580.3,213.0"/>
<polyline class="pc" points="580.3,213.0 600.5,214.6"/>
<polyline class="fp" points="580.3,213.0 600.5,214.6"/>
<polyline class="pc" points="580.3,213.0 560.1,234.0 536.8,238.7"/>
<polyline class="fp" points="580.3,213.0 560.1,234.0 536.8,238.7"/>
<polyline class="pc" points="665.3,1.6 646.6,10.1 645.1,15.5"/>
<polyline class="fp" points="665.3,1.6 646.6,10.1 645.1,15.5"/>
<polyline class="pc" points="645.8,14.8 662.2,12.4 682.4,8.5 702.6,13.2 718.1,17.1 729.0,31.1 735.2,46.6 736.8,53.6"/>
<polyline class="fp" points="645.8,14.8 662.2,12.4 682.4,8.5 702.6,13.2 718.1,17.1 729.0,31.1 735.2,46.6 736.8,53.6"/>
<polyline class="pc" points="736.8,54.4 732.1,71.5 725.9,83.9 718.1,93.2 696.3,111.1 673.0,124.3 666.8,125.9"/>
<polyline class="fp" points="736.8,54.4 732.1,71.5 725.9,83.9 718.1,93.2 696.3,111.1 673.0,124.3 666.8,125.9"/>
<polyline class="pc" points="651.3,19.4 638.9,31.1 631.1,43.5 620.2,71.5 614.8,84.7 599.2,93.6"/>
<polyline class="fp" points="651.3,19.4 638.9,31.1 631.1,43.5 620.2,71.5 614.8,84.7 599.2,93.6"/>
<polyline class="pc" points="631.1,45.1 634.2,62.2 640.4,76.1 652.8,96.3 666.8,111.9 670.7,124.3 668.4,133.6 666.0,140.6"/>
<polyline class="fp" points="631.1,45.1 634.2,62.2 640.4,76.1 652.8,96.3 666.8,111.9 670.7,124.3 668.4,133.6 666.0,140.6"/>
<polyline class="pc" points="614.8,85.2 635.7,86.2 648.2,91.7"/>
<polyline class="fp" points="614.8,85.2 635.7,86.2 648.2,91.7"/>
<polyline class="pc" points="740.6,-0.8 753.8,17.1 756.2,31.1 750.0,51.3 749.2,54.4"/>
<polyline class="fp" points="740.6,-0.8 753.8,17.1 756.2,31.1 750.0,51.3 749.2,54.4"/>
<polyline class="pc" points="737.5,54.1 749.2,54.1"/>
<polyline class="fp" points="737.5,54.1 749.2,54.1"/>
<polyline class="pc" points="749.2,55.2 755.4,74.6 760.1,83.1 769.4,89.4 791.9,101.0"/>
<polyline class="fp" points="749.2,55.2 755.4,74.6 760.1,83.1 769.4,89.4 791.9,101.0"/>
<polyline class="pc" points="718.1,93.2 732.1,89.4 743.0,85.5 761.6,84.7"/>
<polyline class="fp" points="718.1,93.2 732.1,89.4 743.0,85.5 761.6,84.7"/>
<polyline class="pc" points="786.5,6.2 800.5,5.4"/>
<polyline class="fp" points="786.5,6.2 800.5,5.4"/>
<polyline class="pc" points="788.0,7.0 788.8,23.3 795.8,35.7 800.5,62.2"/>
<polyline class="fp" points="788.0,7.0 788.8,23.3 795.8,35.7 800.5,62.2"/>
<polyline class="pc" points="800.5,74.6 792.7,101.0"/>
<polyline class="fp" points="800.5,74.6 792.7,101.0"/>
<polyline class="pc" points="644.3,-0.8 643.5,10.1 621.8,27.2 599.2,43.0"/>
<polyline class="cy" points="644.3,-0.8 643.5,10.1 621.8,27.2 599.2,43.0" style="stroke-width:2.1"/>
<polyline class="cy" points="715.8,132.9 739.9,125.1 770.9,120.4 800.5,116.9" style="stroke-width:1.4"/>
<polyline class="pc" points="662.2,143.1 638.9,169.5 620.2,189.7"/>
<polyline class="fp" points="662.2,143.1 638.9,169.5 620.2,189.7"/>
<polyline class="pc" points="620.2,191.3 617.9,209.9"/>
<polyline class="fp" points="620.2,191.3 617.9,209.9"/>
<polyline class="pc" points="682.4,149.3 662.2,178.9 637.3,206.8 635.0,213.0"/>
<polyline class="fp" points="682.4,149.3 662.2,178.9 637.3,206.8 635.0,213.0"/>
<polyline class="pc" points="599.2,214.6 617.9,210.7 634.2,215.4 649.7,215.4"/>
<polyline class="fp" points="599.2,214.6 617.9,210.7 634.2,215.4 649.7,215.4"/>
<polyline class="pc" points="635.0,216.1 637.3,248.8 638.1,281.4"/>
<polyline class="fp" points="635.0,216.1 637.3,248.8 638.1,281.4"/>
<polyline class="pc" points="638.1,279.2 631.9,308.0 637.3,342.2 645.1,379.5"/>
<polyline class="fp" points="638.1,279.2 631.9,308.0 637.3,342.2 645.1,379.5"/>
<polyline class="pc" points="645.1,380.2 674.6,381.8 715.8,379.5"/>
<polyline class="fp" points="645.1,380.2 674.6,381.8 715.8,379.5"/>
<polyline class="pc" points="645.1,381.0 654.4,398.1 658.3,415.2"/>
<polyline class="fp" points="645.1,381.0 654.4,398.1 658.3,415.2"/>
<polyline class="pc" points="799.2,5.4 825.6,1.9 828.0,-0.8"/>
<polyline class="fp" points="799.2,5.4 825.6,1.9 828.0,-0.8"/>
<polyline class="pc" points="828.0,2.3 831.9,42.0 799.2,46.6"/>
<polyline class="fp" points="828.0,2.3 831.9,42.0 799.2,46.6"/>
<polyline class="pc" points="832.6,43.5 839.6,65.3"/>
<polyline class="fp" points="832.6,43.5 839.6,65.3"/>
<polyline class="pc" points="800.0,46.6 800.0,74.6"/>
<polyline class="fp" points="800.0,46.6 800.0,74.6"/>
<polyline class="pc" points="799.2,101.3 852.8,99.5 865.3,94.0 881.6,92.9"/>
<polyline class="cyd" points="799.2,101.3 852.8,99.5 865.3,94.0 881.6,92.9" style="stroke-dasharray:3 3.6"/>
<polyline class="pc" points="799.2,117.3 877.7,124.3 915.0,133.6 929.0,131.3"/>
<polyline class="cy" points="799.2,117.3 877.7,124.3 915.0,133.6 929.0,131.3"/>
<polyline class="cyd" points="929.0,131.3 955.4,129.0 970.9,119.7 1000.5,114.2" style="stroke-dasharray:3 3.6"/>
<polyline class="pc" points="806.2,146.2 817.1,160.2 821.8,178.9 823.3,188.2 829.5,193.6 830.3,204.5"/>
<polyline class="fp" points="806.2,146.2 817.1,160.2 821.8,178.9 823.3,188.2 829.5,193.6 830.3,204.5"/>
<polyline class="pc" points="829.5,193.6 840.4,185.1 857.5,176.5 866.0,164.9"/>
<polyline class="fp" points="829.5,193.6 840.4,185.1 857.5,176.5 866.0,164.9"/>
<polyline class="pc" points="831.9,214.6 835.0,236.3 838.9,261.2 841.2,281.4"/>
<polyline class="fp" points="831.9,214.6 835.0,236.3 838.9,261.2 841.2,281.4"/>
<polyline class="pc" points="845.1,283.1 847.4,317.3"/><polyline class="fp" points="845.1,283.1 847.4,317.3" style="stroke-dasharray:4.5 3.2"/>
<polyline class="pc" points="814.8,368.3 879.3,362.4"/><polyline class="fp" points="814.8,368.3 879.3,362.4" style="stroke-dasharray:4.5 3.2"/>
<polyline class="pc" points="924.3,354.6 960.8,349.9"/><polyline class="fp" points="924.3,354.6 960.8,349.9" style="stroke-dasharray:4.5 3.2"/>
<polyline class="pc" points="925.1,355.4 928.2,388.8"/><polyline class="fp" points="925.1,355.4 928.2,388.8" style="stroke-dasharray:4.5 3.2"/>
<polyline class="pc" points="870.7,365.5 873.8,390.3"/><polyline class="fp" points="870.7,365.5 873.8,390.3" style="stroke-dasharray:4.5 3.2"/>
<polyline class="pc" points="999.2,113.8 1046.6,105.7 1108.8,95.1 1160.1,90.9"/>
<polyline class="cyd" points="999.2,113.8 1046.6,105.7 1108.8,95.1 1160.1,90.9" style="stroke-dasharray:3 3.6"/></g>
<g id="L-label" filter="url(#soft2)"><text class="rl-h" x="19.4" y="110.6" font-size="10.5" textLength="65.0" lengthAdjust="spacingAndGlyphs" transform="rotate(19.0 19.4 110.6)" text-anchor="start">Richtstraße</text>
<text class="rl" x="19.4" y="110.6" font-size="10.5" textLength="65.0" lengthAdjust="spacingAndGlyphs" transform="rotate(19.0 19.4 110.6)" text-anchor="start">Richtstraße</text>
<text class="rl-h" x="75.7" y="1.6" font-size="10.5" textLength="30.0" lengthAdjust="spacingAndGlyphs" transform="rotate(72.0 75.7 1.6)" text-anchor="start">arten</text>
<text class="rl" x="75.7" y="1.6" font-size="10.5" textLength="30.0" lengthAdjust="spacingAndGlyphs" transform="rotate(72.0 75.7 1.6)" text-anchor="start">arten</text>
<text class="rl-h" x="-1.2" y="101.0" font-size="10.5" textLength="18.0" lengthAdjust="spacingAndGlyphs" transform="rotate(-30.0 -1.2 101.0)" text-anchor="start">stra</text>
<text class="rl" x="-1.2" y="101.0" font-size="10.5" textLength="18.0" lengthAdjust="spacingAndGlyphs" transform="rotate(-30.0 -1.2 101.0)" text-anchor="start">stra</text>
<text class="sl-h" x="0.0" y="170.3" font-size="12.5" textLength="89.0" lengthAdjust="spacingAndGlyphs" text-anchor="start">Berufsbildende</text>
<text class="sl" x="0.0" y="170.3" font-size="12.5" textLength="89.0" lengthAdjust="spacingAndGlyphs" text-anchor="start">Berufsbildende</text>
<text class="sl-h" x="20.2" y="186.6" font-size="12.5" textLength="47.0" lengthAdjust="spacingAndGlyphs" text-anchor="start">Schulen</text>
<text class="sl" x="20.2" y="186.6" font-size="12.5" textLength="47.0" lengthAdjust="spacingAndGlyphs" text-anchor="start">Schulen</text>
<text class="sl-h" x="41.6" y="202.5" font-size="12.5" text-anchor="start">1</text>
<text class="sl" x="41.6" y="202.5" font-size="12.5" text-anchor="start">1</text>
<text class="wl-h" x="91.5" y="331.5" font-size="13.5" textLength="119" lengthAdjust="spacingAndGlyphs" transform="rotate(-80.7 91.5 331.5)">Ordemanns Graben</text>
<text class="wl" x="91.5" y="331.5" font-size="13.5" textLength="119" lengthAdjust="spacingAndGlyphs" transform="rotate(-80.7 91.5 331.5)">Ordemanns Graben</text>
<text class="rl-h" x="197.8" y="415" font-size="10.3" textLength="86" lengthAdjust="spacingAndGlyphs" transform="rotate(-79.8 197.8 415)">d-Sanders-Weg</text>
<text class="rl" x="197.8" y="415" font-size="10.3" textLength="86" lengthAdjust="spacingAndGlyphs" transform="rotate(-79.8 197.8 415)">d-Sanders-Weg</text>
<text class="rl-h" x="251.6" y="-1.9" font-size="10.3" textLength="55.0" lengthAdjust="spacingAndGlyphs" transform="rotate(84.0 251.6 -1.9)" text-anchor="start">erstraße</text>
<text class="rl" x="251.6" y="-1.9" font-size="10.3" textLength="55.0" lengthAdjust="spacingAndGlyphs" transform="rotate(84.0 251.6 -1.9)" text-anchor="start">erstraße</text>
<text class="dl-h" x="355.4" y="17.4" font-size="12.5" textLength="33.0" lengthAdjust="spacingAndGlyphs" transform="rotate(80.0 355.4 17.4)" text-anchor="start">Mitte</text>
<text class="dl" x="355.4" y="17.4" font-size="12.5" textLength="33.0" lengthAdjust="spacingAndGlyphs" transform="rotate(80.0 355.4 17.4)" text-anchor="start">Mitte</text>
<text class="rl-h" x="224.9" y="169.5" font-size="10.3" textLength="65.0" lengthAdjust="spacingAndGlyphs" transform="rotate(17.5 224.9 169.5)" text-anchor="start">Richtstraße</text>
<text class="rl" x="224.9" y="169.5" font-size="10.3" textLength="65.0" lengthAdjust="spacingAndGlyphs" transform="rotate(17.5 224.9 169.5)" text-anchor="start">Richtstraße</text>
<text class="shl-h" x="244.3" y="349.2" font-size="15" textLength="80.0" lengthAdjust="spacingAndGlyphs" text-anchor="start">Jute-Center</text>
<text class="shl" x="244.3" y="349.2" font-size="15" textLength="80.0" lengthAdjust="spacingAndGlyphs" text-anchor="start">Jute-Center</text>
<text class="sl-h" x="457.5" y="75.4" font-size="12.5" textLength="65.0" lengthAdjust="spacingAndGlyphs" text-anchor="start">Parkschule</text>
<text class="sl" x="457.5" y="75.4" font-size="12.5" textLength="65.0" lengthAdjust="spacingAndGlyphs" text-anchor="start">Parkschule</text>
<text class="rl-h" x="431.9" y="310.8" font-size="10.3" textLength="80.0" lengthAdjust="spacingAndGlyphs" transform="rotate(-17.0 431.9 310.8)" text-anchor="start">Am Wollepark</text>
<text class="rl" x="431.9" y="310.8" font-size="10.3" textLength="80.0" lengthAdjust="spacingAndGlyphs" transform="rotate(-17.0 431.9 310.8)" text-anchor="start">Am Wollepark</text>
<text class="rl-h" x="504.4" y="324.8" font-size="10.3" textLength="79.0" lengthAdjust="spacingAndGlyphs" transform="rotate(57.4 504.4 324.8)" text-anchor="start">Am Wollepark</text>
<text class="rl" x="504.4" y="324.8" font-size="10.3" textLength="79.0" lengthAdjust="spacingAndGlyphs" transform="rotate(57.4 504.4 324.8)" text-anchor="start">Am Wollepark</text>
<text class="rl-h" x="431.9" y="338.3" font-size="13" textLength="82.0" lengthAdjust="spacingAndGlyphs" transform="rotate(76.4 431.9 338.3)" text-anchor="start">Stedinger Str</text>
<text class="rl" x="431.9" y="338.3" font-size="13" textLength="82.0" lengthAdjust="spacingAndGlyphs" transform="rotate(76.4 431.9 338.3)" text-anchor="start">Stedinger Str</text>
<text class="gl-h" x="654.4" y="89.4" font-size="16" textLength="72.0" lengthAdjust="spacingAndGlyphs" text-anchor="start">Wollepark</text>
<text class="gl" x="654.4" y="89.4" font-size="16" textLength="72.0" lengthAdjust="spacingAndGlyphs" text-anchor="start">Wollepark</text>
<text class="wl-h" x="733.3" y="125.1" font-size="17" textLength="44.0" lengthAdjust="spacingAndGlyphs" transform="rotate(-11.0 733.3 125.1)" text-anchor="start">Delme</text>
<text class="wl" x="733.3" y="125.1" font-size="17" textLength="44.0" lengthAdjust="spacingAndGlyphs" transform="rotate(-11.0 733.3 125.1)" text-anchor="start">Delme</text>
<text class="rl-h" x="757.0" y="137.5" font-size="10.3" textLength="44.0" lengthAdjust="spacingAndGlyphs" transform="rotate(-9.0 757.0 137.5)" text-anchor="start">Henrich</text>
<text class="rl" x="757.0" y="137.5" font-size="10.3" textLength="44.0" lengthAdjust="spacingAndGlyphs" transform="rotate(-9.0 757.0 137.5)" text-anchor="start">Henrich</text>
<text class="rl-h" x="685.0" y="164.9" font-size="10.3" textLength="53.0" lengthAdjust="spacingAndGlyphs" transform="rotate(78.0 685.0 164.9)" text-anchor="start">Fabrikhof</text>
<text class="rl" x="685.0" y="164.9" font-size="10.3" textLength="53.0" lengthAdjust="spacingAndGlyphs" transform="rotate(78.0 685.0 164.9)" text-anchor="start">Fabrikhof</text>
<text class="rl-h" x="732.9" y="191.0" font-size="10.3" textLength="47.0" lengthAdjust="spacingAndGlyphs" transform="rotate(-10.0 732.9 191.0)" text-anchor="start">Weiferei</text>
<text class="rl" x="732.9" y="191.0" font-size="10.3" textLength="47.0" lengthAdjust="spacingAndGlyphs" transform="rotate(-10.0 732.9 191.0)" text-anchor="start">Weiferei</text>
<text class="rl-h" x="748.4" y="223.6" font-size="10.3" textLength="53.0" lengthAdjust="spacingAndGlyphs" transform="rotate(-10.0 748.4 223.6)" text-anchor="start">Zwirnerei</text>
<text class="rl" x="748.4" y="223.6" font-size="10.3" textLength="53.0" lengthAdjust="spacingAndGlyphs" transform="rotate(-10.0 748.4 223.6)" text-anchor="start">Zwirnerei</text>
<text class="rl-h" x="780.8" y="259.7" font-size="10.3" textLength="108.5" lengthAdjust="spacingAndGlyphs" transform="rotate(-7 780.8 259.7)">Otto-Jenzok-Straße</text>
<text class="rl" x="780.8" y="259.7" font-size="10.3" textLength="108.5" lengthAdjust="spacingAndGlyphs" transform="rotate(-7 780.8 259.7)">Otto-Jenzok-Straße</text>
<text class="rl-h" x="704.7" y="295.5" font-size="10.3" textLength="54.7" lengthAdjust="spacingAndGlyphs" transform="rotate(78.5 704.7 295.5)" text-anchor="start">Fabrikhof</text>
<text class="rl" x="704.7" y="295.5" font-size="10.3" textLength="54.7" lengthAdjust="spacingAndGlyphs" transform="rotate(78.5 704.7 295.5)" text-anchor="start">Fabrikhof</text>
<text class="rl-h" x="956.2" y="9.6" font-size="10.3" textLength="76.0" lengthAdjust="spacingAndGlyphs" transform="rotate(79.5 956.2 9.6)" text-anchor="start">Ulmenstraße</text>
<text class="rl" x="956.2" y="9.6" font-size="10.3" textLength="76.0" lengthAdjust="spacingAndGlyphs" transform="rotate(79.5 956.2 9.6)" text-anchor="start">Ulmenstraße</text>
<text class="rl-h" x="799.2" y="131.8" font-size="10.3" textLength="91.0" lengthAdjust="spacingAndGlyphs" transform="rotate(7.0 799.2 131.8)" text-anchor="start">-Deetjen-Straße</text>
<text class="rl" x="799.2" y="131.8" font-size="10.3" textLength="91.0" lengthAdjust="spacingAndGlyphs" transform="rotate(7.0 799.2 131.8)" text-anchor="start">-Deetjen-Straße</text>
<text class="rl-h" x="957.7" y="5.0" font-size="10.3" textLength="36.0" lengthAdjust="spacingAndGlyphs" transform="rotate(-8.0 957.7 5.0)" text-anchor="start">Helms</text>
<text class="rl" x="957.7" y="5.0" font-size="10.3" textLength="36.0" lengthAdjust="spacingAndGlyphs" transform="rotate(-8.0 957.7 5.0)" text-anchor="start">Helms</text>
<text class="rl-h" x="989.9" y="92.5" font-size="10.3" textLength="14.0" lengthAdjust="spacingAndGlyphs" transform="rotate(-8.0 989.9 92.5)" text-anchor="start">Pa</text>
<text class="rl" x="989.9" y="92.5" font-size="10.3" textLength="14.0" lengthAdjust="spacingAndGlyphs" transform="rotate(-8.0 989.9 92.5)" text-anchor="start">Pa</text>
<text class="rl-h" x="857.0" y="208.7" font-size="10.3" textLength="55.0" lengthAdjust="spacingAndGlyphs" transform="rotate(-9.5 857.0 208.7)" text-anchor="start">Spinnerei</text>
<text class="rl" x="857.0" y="208.7" font-size="10.3" textLength="55.0" lengthAdjust="spacingAndGlyphs" transform="rotate(-9.5 857.0 208.7)" text-anchor="start">Spinnerei</text>
<text class="pl-h" x="923.5" y="237.1" font-size="15.5" textLength="36.5" lengthAdjust="spacingAndGlyphs" text-anchor="start">Nord</text>
<text class="pl" x="923.5" y="237.1" font-size="15.5" textLength="36.5" lengthAdjust="spacingAndGlyphs" text-anchor="start">Nord</text>
<text class="rl-h" x="843" y="255" font-size="10.3" textLength="49.5" lengthAdjust="spacingAndGlyphs" transform="rotate(83 843 255)">Seilgang</text>
<text class="rl" x="843" y="255" font-size="10.3" textLength="49.5" lengthAdjust="spacingAndGlyphs" transform="rotate(83 843 255)">Seilgang</text>
<text class="rl-h" x="869.6" y="288" font-size="10.3" textLength="48" lengthAdjust="spacingAndGlyphs" transform="rotate(-9 869.6 288)">Färberei</text>
<text class="rl" x="869.6" y="288" font-size="10.3" textLength="48" lengthAdjust="spacingAndGlyphs" transform="rotate(-9 869.6 288)">Färberei</text>
<text class="rl-h" x="761.6" y="338.5" font-size="10.3" textLength="60" lengthAdjust="spacingAndGlyphs" transform="rotate(-9.5 761.6 338.5)">Kämmerei</text>
<text class="rl" x="761.6" y="338.5" font-size="10.3" textLength="60" lengthAdjust="spacingAndGlyphs" transform="rotate(-9.5 761.6 338.5)">Kämmerei</text>
<text class="rl-h" x="932.1" y="392.2" font-size="10.3" textLength="58.0" lengthAdjust="spacingAndGlyphs" transform="rotate(-7.0 932.1 392.2)" text-anchor="start">Wollelager</text>
<text class="rl" x="932.1" y="392.2" font-size="10.3" textLength="58.0" lengthAdjust="spacingAndGlyphs" transform="rotate(-7.0 932.1 392.2)" text-anchor="start">Wollelager</text>
<text class="rl-h" x="998.8" y="93.2" font-size="10.3" textLength="66.0" lengthAdjust="spacingAndGlyphs" transform="rotate(-9.0 998.8 93.2)" text-anchor="start">appelstraße</text>
<text class="rl" x="998.8" y="93.2" font-size="10.3" textLength="66.0" lengthAdjust="spacingAndGlyphs" transform="rotate(-9.0 998.8 93.2)" text-anchor="start">appelstraße</text>
<text class="rl-h" x="1006.2" y="139.9" font-size="10.3" textLength="74.0" lengthAdjust="spacingAndGlyphs" transform="rotate(-9.0 1006.2 139.9)" text-anchor="start">Andenstraße</text>
<text class="rl" x="1006.2" y="139.9" font-size="10.3" textLength="74.0" lengthAdjust="spacingAndGlyphs" transform="rotate(-9.0 1006.2 139.9)" text-anchor="start">Andenstraße</text>
<text class="rl-h" x="1159.8" y="118.9" font-size="10.3" textLength="43.7" lengthAdjust="spacingAndGlyphs" transform="rotate(82.0 1159.8 118.9)" text-anchor="start">La Plata</text>
<text class="rl" x="1159.8" y="118.9" font-size="10.3" textLength="43.7" lengthAdjust="spacingAndGlyphs" transform="rotate(82.0 1159.8 118.9)" text-anchor="start">La Plata</text>
<text class="rl-h" x="1129.8" y="1.6" font-size="10.3" textLength="12.0" lengthAdjust="spacingAndGlyphs" transform="rotate(80.0 1129.8 1.6)" text-anchor="start">ße</text>
<text class="rl" x="1129.8" y="1.6" font-size="10.3" textLength="12.0" lengthAdjust="spacingAndGlyphs" transform="rotate(80.0 1129.8 1.6)" text-anchor="start">ße</text>
<text class="rl-h" x="1175.6" y="11.7" font-size="10.3" transform="rotate(60.0 1175.6 11.7)" text-anchor="start">e</text>
<text class="rl" x="1175.6" y="11.7" font-size="10.3" transform="rotate(60.0 1175.6 11.7)" text-anchor="start">e</text>
<text class="rl-h" x="1166.6" y="207.6" font-size="10.3" textLength="16.0" lengthAdjust="spacingAndGlyphs" transform="rotate(15.0 1166.6 207.6)" text-anchor="start" style="font-style:italic">-St</text>
<text class="rl" x="1166.6" y="207.6" font-size="10.3" textLength="16.0" lengthAdjust="spacingAndGlyphs" transform="rotate(15.0 1166.6 207.6)" text-anchor="start" style="font-style:italic">-St</text></g>
<g id="L-icon" filter="url(#soft)"><path d="M153.8 367.8l2.2 1.6M157.1 368.3l2.2 1.6M160.3 368.8l2.2 1.6M163.6 369.3l2.2 1.6M166.8 369.8l2.2 1.6M170.1 370.3l2.2 1.6M173.3 370.8l2.2 1.6M176.6 371.3l2.2 1.6M179.8 371.8l2.2 1.6M183.1 372.3l2.2 1.6M186.3 372.7l2.2 1.6M189.6 373.2l2.2 1.6" fill="none" stroke="#c9c9c9" stroke-width="1.3"/>
<path d="M151.5 383.3l2.2 1.6M154.7 383.8l2.2 1.6M157.9 384.3l2.2 1.6M161.1 384.8l2.2 1.6M164.2 385.3l2.2 1.6M167.4 385.8l2.2 1.6M170.6 386.3l2.2 1.6M173.8 386.8l2.2 1.6M176.9 387.3l2.2 1.6M180.1 387.8l2.2 1.6M183.3 388.3l2.2 1.6M186.5 388.8l2.2 1.6" fill="none" stroke="#c9c9c9" stroke-width="1.3"/>
<path d="M149.2 398.9l2.2 1.6M152.4 399.4l2.2 1.6M155.7 399.9l2.2 1.6M158.9 400.4l2.2 1.6M162.2 400.9l2.2 1.6M165.4 401.4l2.2 1.6M168.7 401.8l2.2 1.6M171.9 402.3l2.2 1.6M175.2 402.8l2.2 1.6M178.4 403.3l2.2 1.6M181.7 403.8l2.2 1.6M184.9 404.3l2.2 1.6" fill="none" stroke="#c9c9c9" stroke-width="1.3"/>
<text class="Pk" x="157.3" y="395.8" font-size="22" text-anchor="start" style="fill:#6db1e6;font-weight:normal">P</text>
<g class="tree" transform="translate(117.3 301.8) scale(1.0)"><circle cx="-3.2" cy="-2.5" r="2.6"/><path d="M-3.2 0v5.5M3.3 -6l-2.6 7.5h5.2zM3.3 1.5v4"/></g>
<g class="tree" transform="translate(136.8 351.8) scale(1.0)"><circle cx="-3.2" cy="-2.5" r="2.6"/><path d="M-3.2 0v5.5M3.3 -6l-2.6 7.5h5.2zM3.3 1.5v4"/></g>
<polygon class="bus" points="367.0,72.7 375.5,72.7 375.5,80.8 367.0,80.8"/>
<polygon class="bus" points="373.3,-1.6 381.0,-1.6 381.0,1.6 373.3,1.6"/>
<path d="M278.5 268.7l2.2 1.6M281.7 269.2l2.2 1.6M284.9 269.6l2.2 1.6M288.1 270.1l2.2 1.6M291.3 270.6l2.2 1.6M294.5 271.1l2.2 1.6M297.7 271.5l2.2 1.6M300.9 272.0l2.2 1.6M304.1 272.5l2.2 1.6M307.3 273.0l2.2 1.6M310.5 273.5l2.2 1.6M313.7 273.9l2.2 1.6M316.9 274.4l2.2 1.6M320.1 274.9l2.2 1.6M323.3 275.4l2.2 1.6M326.6 275.9l2.2 1.6M329.8 276.3l2.2 1.6M333.0 276.8l2.2 1.6M336.2 277.3l2.2 1.6M339.4 277.8l2.2 1.6M342.6 278.3l2.2 1.6M345.8 278.7l2.2 1.6M349.0 279.2l2.2 1.6M352.2 279.7l2.2 1.6M355.4 280.2l2.2 1.6" fill="none" stroke="#c9c9c9" stroke-width="1.3"/>
<path d="M263.7 149v14m-2.6-4.2l2.6 5 2.6-5z" stroke="#555" stroke-width="1" fill="#555"/>
<g><rect x="368.4" y="168.3" width="53" height="26.3" rx="3" fill="#f2f3d4" stroke="#bcc083" stroke-width="1"/><text x="376.4" y="187" font-size="16" textLength="37.5" lengthAdjust="spacingAndGlyphs" fill="#565d22" stroke="#565d22" stroke-width=".45" style="font-family:'DejaVu Sans',sans-serif">L 875</text></g>
<g transform="translate(347.6 258.4)" fill="none" stroke="#ac39ac"><path d="M-8.5 -5.5h13.5l-1.2 7.5h-11z" fill="#ac39ac" stroke-width=".8"/><path d="M9 -8.5l-2.5 2.5-1.5 9.5M-7.5 4.8h12.5M-5.5 7.6h9.5" stroke-width="1.5"/><path d="M-6 -3.1h9.5M-6 -0.7h9M-4.3 -5.5v7.5M-1.6 -5.5v7.5M1.1 -5.5v7.5" stroke="#e9c7e9" stroke-width=".7"/></g>
<path d="M315.0 279.2l2.2 1.6M318.2 279.9l2.2 1.6M321.5 280.6l2.2 1.6M324.7 281.4l2.2 1.6M327.9 282.1l2.2 1.6M331.2 282.8l2.2 1.6M334.4 283.5l2.2 1.6M337.7 284.2l2.2 1.6M340.9 284.9l2.2 1.6M344.1 285.6l2.2 1.6M347.4 286.3l2.2 1.6M350.6 287.1l2.2 1.6M353.8 287.8l2.2 1.6" fill="none" stroke="#c9c9c9" stroke-width="1.3"/>
<path d="M273.0 283.4l2.2 1.6M276.2 284.2l2.2 1.6M279.4 285.0l2.2 1.6M282.6 285.8l2.2 1.6M285.8 286.6l2.2 1.6M289.0 287.4l2.2 1.6M292.2 288.2l2.2 1.6M295.4 289.0l2.2 1.6M298.6 289.8l2.2 1.6M301.8 290.6l2.2 1.6M305.1 291.4l2.2 1.6M308.3 292.2l2.2 1.6M311.5 293.0l2.2 1.6M314.7 293.8l2.2 1.6M317.9 294.6l2.2 1.6M321.1 295.4l2.2 1.6M324.3 296.1l2.2 1.6M327.5 296.9l2.2 1.6M330.7 297.7l2.2 1.6M333.9 298.5l2.2 1.6M337.1 299.3l2.2 1.6M340.3 300.1l2.2 1.6M343.5 300.9l2.2 1.6M346.7 301.7l2.2 1.6M349.9 302.5l2.2 1.6M353.1 303.3l2.2 1.6" fill="none" stroke="#c9c9c9" stroke-width="1.3"/>
<path d="M269.2 299.4l2.2 1.6M272.3 300.2l2.2 1.6M275.5 300.9l2.2 1.6M278.7 301.7l2.2 1.6M281.9 302.4l2.2 1.6M285.1 303.2l2.2 1.6M288.3 303.9l2.2 1.6M291.5 304.7l2.2 1.6M294.7 305.4l2.2 1.6M297.9 306.2l2.2 1.6M301.1 306.9l2.2 1.6M304.3 307.7l2.2 1.6M307.5 308.4l2.2 1.6M310.7 309.2l2.2 1.6M313.9 309.9l2.2 1.6M317.1 310.6l2.2 1.6M320.3 311.4l2.2 1.6M323.5 312.1l2.2 1.6M326.7 312.9l2.2 1.6M329.8 313.6l2.2 1.6M333.0 314.4l2.2 1.6M336.2 315.1l2.2 1.6M339.4 315.9l2.2 1.6M342.6 316.6l2.2 1.6M345.8 317.4l2.2 1.6M349.0 318.1l2.2 1.6M352.2 318.9l2.2 1.6M355.4 319.6l2.2 1.6" fill="none" stroke="#c9c9c9" stroke-width="1.3"/>
<path d="M265.3 316.5l2.2 1.6M268.5 317.3l2.2 1.6M271.7 318.1l2.2 1.6M274.9 318.9l2.2 1.6M278.1 319.6l2.2 1.6M281.3 320.4l2.2 1.6M284.6 321.2l2.2 1.6M287.8 322.0l2.2 1.6M291.0 322.7l2.2 1.6M294.2 323.5l2.2 1.6M297.4 324.3l2.2 1.6M300.6 325.1l2.2 1.6M303.9 325.8l2.2 1.6M307.1 326.6l2.2 1.6M310.3 327.4l2.2 1.6M313.5 328.2l2.2 1.6M316.7 329.0l2.2 1.6M319.9 329.7l2.2 1.6M323.1 330.5l2.2 1.6M326.4 331.3l2.2 1.6M329.6 332.1l2.2 1.6M332.8 332.8l2.2 1.6M336.0 333.6l2.2 1.6M339.2 334.4l2.2 1.6M342.4 335.2l2.2 1.6M345.6 335.9l2.2 1.6M348.9 336.7l2.2 1.6M352.1 337.5l2.2 1.6M355.3 338.3l2.2 1.6M358.5 339.1l2.2 1.6" fill="none" stroke="#c9c9c9" stroke-width="1.3"/>
<path d="M261.4 332.1l2.2 1.6M264.5 332.8l2.2 1.6M267.6 333.5l2.2 1.6M270.8 334.2l2.2 1.6M273.9 335.0l2.2 1.6M277.0 335.7l2.2 1.6M280.2 336.4l2.2 1.6M283.3 337.2l2.2 1.6M286.4 337.9l2.2 1.6M289.6 338.6l2.2 1.6M292.7 339.3l2.2 1.6M295.8 340.1l2.2 1.6M299.0 340.8l2.2 1.6M302.1 341.5l2.2 1.6M305.2 342.3l2.2 1.6M308.4 343.0l2.2 1.6M311.5 343.7l2.2 1.6M314.6 344.4l2.2 1.6M317.8 345.2l2.2 1.6M320.9 345.9l2.2 1.6M324.0 346.6l2.2 1.6M327.2 347.4l2.2 1.6M330.3 348.1l2.2 1.6M333.4 348.8l2.2 1.6M336.6 349.5l2.2 1.6M339.7 350.3l2.2 1.6M342.8 351.0l2.2 1.6M346.0 351.7l2.2 1.6M349.1 352.5l2.2 1.6M352.2 353.2l2.2 1.6M355.4 353.9l2.2 1.6M358.5 354.6l2.2 1.6M361.6 355.4l2.2 1.6" fill="none" stroke="#c9c9c9" stroke-width="1.3"/>
<path d="M324.3 346.8l2.2 1.6M327.4 347.7l2.2 1.6M330.5 348.6l2.2 1.6M333.6 349.5l2.2 1.6M336.8 350.4l2.2 1.6M339.9 351.4l2.2 1.6M343.0 352.3l2.2 1.6M346.1 353.2l2.2 1.6M349.2 354.1l2.2 1.6M352.3 355.0l2.2 1.6M355.4 355.9l2.2 1.6M358.5 356.8l2.2 1.6M361.6 357.7l2.2 1.6" fill="none" stroke="#c9c9c9" stroke-width="1.3"/>
<path d="M363.2 311.9l2.2 1.6M366.6 311.1l2.2 1.6M370.0 310.3l2.2 1.6M373.3 309.5l2.2 1.6M376.7 308.7l2.2 1.6M380.1 308.0l2.2 1.6M383.5 307.2l2.2 1.6M386.9 306.4l2.2 1.6M390.3 305.6l2.2 1.6M393.7 304.9l2.2 1.6M397.1 304.1l2.2 1.6M400.5 303.3l2.2 1.6" fill="none" stroke="#c9c9c9" stroke-width="1.3"/>
<path d="M378.7 276.9l2.2 1.6M380.1 280.0l2.2 1.6M381.6 283.1l2.2 1.6M383.0 286.2l2.2 1.6M384.4 289.3l2.2 1.6M385.8 292.4l2.2 1.6M387.3 295.5l2.2 1.6" fill="none" stroke="#c9c9c9" stroke-width="1.3"/>
<text class="Pk" x="364.7" y="299.9" font-size="21.5" text-anchor="start">P</text>
<text class="Pk" x="301.8" y="329.4" font-size="22" text-anchor="start" style="fill:#6db1e6;font-weight:normal">P</text>
<g transform="translate(315.8 361.6)" fill="none" stroke="#ac39ac"><path d="M-8.5 -5.5h13.5l-1.2 7.5h-11z" fill="#ac39ac" stroke-width=".8"/><path d="M9 -8.5l-2.5 2.5-1.5 9.5M-7.5 4.8h12.5M-5.5 7.6h9.5" stroke-width="1.5"/><path d="M-6 -3.1h9.5M-6 -0.7h9M-4.3 -5.5v7.5M-1.6 -5.5v7.5M1.1 -5.5v7.5" stroke="#e9c7e9" stroke-width=".7"/></g>
<g class="tree" transform="translate(575.6 24.9) scale(1.0)"><circle cx="-3.2" cy="-2.5" r="2.6"/><path d="M-3.2 0v5.5M3.3 -6l-2.6 7.5h5.2zM3.3 1.5v4"/></g>
<g class="tree" transform="translate(580.3 71.5) scale(1.0)"><circle cx="-3.2" cy="-2.5" r="2.6"/><path d="M-3.2 0v5.5M3.3 -6l-2.6 7.5h5.2zM3.3 1.5v4"/></g>
<g class="tree" transform="translate(561.6 110.3) scale(1.0)"><circle cx="-3.2" cy="-2.5" r="2.6"/><path d="M-3.2 0v5.5M3.3 -6l-2.6 7.5h5.2zM3.3 1.5v4"/></g>
<g class="tree" transform="translate(574.0 157.1) scale(1.0)"><circle cx="-3.2" cy="-2.5" r="2.6"/><path d="M-3.2 0v5.5M3.3 -6l-2.6 7.5h5.2zM3.3 1.5v4"/></g>
<g class="tree" transform="translate(557.0 199.1) scale(1.0)"><circle cx="-3.2" cy="-2.5" r="2.6"/><path d="M-3.2 0v5.5M3.3 -6l-2.6 7.5h5.2zM3.3 1.5v4"/></g>
<polygon class="bus" points="422.4,371.7 430.5,371.7 430.5,379.5 422.4,379.5"/>
<polygon class="bus" points="451.3,372.8 459.4,372.8 459.4,380.5 451.3,380.5"/>
<circle class="gd" cx="516.6" cy="304.9" r="1.1"/>
<circle class="gd" cx="516.6" cy="316.5" r="1.1"/>
<circle class="gd" cx="533.6" cy="331.3" r="1.1"/>
<circle class="gd" cx="543.0" cy="363.9" r="1.1"/>
<circle class="gd" cx="558.5" cy="387.2" r="1.1"/>
<circle class="gd" cx="570.9" cy="387.2" r="1.1"/>
<circle class="gd" cx="581.8" cy="388.8" r="1.1"/>
<circle class="gd" cx="566.3" cy="403.5" r="1.1"/>
<circle class="gd" cx="580.3" cy="404.3" r="1.1"/>
<circle class="gd" cx="474.3" cy="337.8" r="0.5" style="fill:#8fbf7f"/>
<circle class="gd" cx="478.9" cy="337.0" r="0.5" style="fill:#8fbf7f"/>
<circle class="gd" cx="483.6" cy="336.3" r="0.5" style="fill:#8fbf7f"/>
<circle class="gd" cx="488.3" cy="335.5" r="0.5" style="fill:#8fbf7f"/>
<circle class="gd" cx="492.9" cy="334.7" r="0.5" style="fill:#8fbf7f"/>
<circle class="gd" cx="475.5" cy="344.6" r="0.5" style="fill:#8fbf7f"/>
<circle class="gd" cx="480.2" cy="343.9" r="0.5" style="fill:#8fbf7f"/>
<circle class="gd" cx="484.8" cy="343.1" r="0.5" style="fill:#8fbf7f"/>
<circle class="gd" cx="489.5" cy="342.3" r="0.5" style="fill:#8fbf7f"/>
<circle class="gd" cx="494.2" cy="341.5" r="0.5" style="fill:#8fbf7f"/>
<circle class="gd" cx="476.8" cy="351.5" r="0.5" style="fill:#8fbf7f"/>
<circle class="gd" cx="481.4" cy="350.7" r="0.5" style="fill:#8fbf7f"/>
<circle class="gd" cx="486.1" cy="349.9" r="0.5" style="fill:#8fbf7f"/>
<circle class="gd" cx="490.8" cy="349.2" r="0.5" style="fill:#8fbf7f"/>
<circle class="gd" cx="495.4" cy="348.4" r="0.5" style="fill:#8fbf7f"/>
<circle class="gd" cx="478.0" cy="358.3" r="0.5" style="fill:#8fbf7f"/>
<circle class="gd" cx="482.7" cy="357.5" r="0.5" style="fill:#8fbf7f"/>
<circle class="gd" cx="487.3" cy="356.8" r="0.5" style="fill:#8fbf7f"/>
<circle class="gd" cx="492.0" cy="356.0" r="0.5" style="fill:#8fbf7f"/>
<circle class="gd" cx="496.7" cy="355.2" r="0.5" style="fill:#8fbf7f"/>
<g stroke="#3f4a05" stroke-width="1.1" fill="#3f4a05"><path d="M421.0 308.7l1.3 12m-3.4-4.6l3.8 6.6 1.6-7.6z"/><path d="M433.4 332.8l-1.5-12m3.4 4.6l-3.8-6.6-1.6 7.6z"/></g>
<g class="tree" transform="translate(558.5 292.4) scale(1.0)"><circle cx="-3.2" cy="-2.5" r="2.6"/><path d="M-3.2 0v5.5M3.3 -6l-2.6 7.5h5.2zM3.3 1.5v4"/></g>
<g class="tree" transform="translate(597.4 287.8) scale(1.0)"><circle cx="-3.2" cy="-2.5" r="2.6"/><path d="M-3.2 0v5.5M3.3 -6l-2.6 7.5h5.2zM3.3 1.5v4"/></g>
<g class="tree" transform="translate(577.9 333.6) scale(1.0)"><circle cx="-3.2" cy="-2.5" r="2.6"/><path d="M-3.2 0v5.5M3.3 -6l-2.6 7.5h5.2zM3.3 1.5v4"/></g>
<polygon class="brg" points="791.0,105.7 793.8,105.7 793.8,113.4 791.0,113.4"/>
<polygon class="brg" points="664.8,123.2 668.2,123.2 668.2,127.9 664.8,127.9"/>
<g class="tree" transform="translate(609.3 46.6) scale(1.0)"><circle cx="-3.2" cy="-2.5" r="2.6"/><path d="M-3.2 0v5.5M3.3 -6l-2.6 7.5h5.2zM3.3 1.5v4"/></g>
<g class="tree" transform="translate(646.6 23.3) scale(1.0)"><circle cx="-3.2" cy="-2.5" r="2.6"/><path d="M-3.2 0v5.5M3.3 -6l-2.6 7.5h5.2zM3.3 1.5v4"/></g>
<g class="tree" transform="translate(697.9 17.1) scale(1.0)"><circle cx="-3.2" cy="-2.5" r="2.6"/><path d="M-3.2 0v5.5M3.3 -6l-2.6 7.5h5.2zM3.3 1.5v4"/></g>
<g class="tree" transform="translate(733.6 32.6) scale(1.0)"><circle cx="-3.2" cy="-2.5" r="2.6"/><path d="M-3.2 0v5.5M3.3 -6l-2.6 7.5h5.2zM3.3 1.5v4"/></g>
<g class="tree" transform="translate(732.1 73.0) scale(1.0)"><circle cx="-3.2" cy="-2.5" r="2.6"/><path d="M-3.2 0v5.5M3.3 -6l-2.6 7.5h5.2zM3.3 1.5v4"/></g>
<g class="tree" transform="translate(767.8 100.2) scale(1.0)"><circle cx="-3.2" cy="-2.5" r="2.6"/><path d="M-3.2 0v5.5M3.3 -6l-2.6 7.5h5.2zM3.3 1.5v4"/></g>
<polygon class="brg" points="620.3,189.6 623.4,191.1 620.7,196.7 617.7,195.2"/>
<polygon class="brg" points="624.2,213.1 625.6,210.0 633.3,213.6 631.9,216.7"/>
<g class="tree" transform="translate(622.5 255.8) scale(1.0)"><circle cx="-3.2" cy="-2.5" r="2.6"/><path d="M-3.2 0v5.5M3.3 -6l-2.6 7.5h5.2zM3.3 1.5v4"/></g>
<g transform="translate(680.8 407.4)"><path d="M-10.2 6v-6l10.2-6.2 10.2 6.2v6z" fill="#734a08"/><path d="M-10 1.5h20M-3 6v-3.5h6v3.5" stroke="#f0e6d8" stroke-width=".8" fill="none"/></g>
<g class="tree" transform="translate(603.1 287.8) scale(1.0)"><circle cx="-3.2" cy="-2.5" r="2.6"/><path d="M-3.2 0v5.5M3.3 -6l-2.6 7.5h5.2zM3.3 1.5v4"/></g>
<g class="tree" transform="translate(650.5 290.9) scale(1.0)"><circle cx="-3.2" cy="-2.5" r="2.6"/><path d="M-3.2 0v5.5M3.3 -6l-2.6 7.5h5.2zM3.3 1.5v4"/></g>
<g class="tree" transform="translate(618.6 342.2) scale(1.0)"><circle cx="-3.2" cy="-2.5" r="2.6"/><path d="M-3.2 0v5.5M3.3 -6l-2.6 7.5h5.2zM3.3 1.5v4"/></g>
<g class="tree" transform="translate(659.8 337.5) scale(1.0)"><circle cx="-3.2" cy="-2.5" r="2.6"/><path d="M-3.2 0v5.5M3.3 -6l-2.6 7.5h5.2zM3.3 1.5v4"/></g>
<polygon class="brg" points="926.8,119.3 931.2,119.3 931.2,126.8 926.8,126.8"/>
<circle class="tree" cx="831.9" cy="381.0" r="2.2"/>
<polygon class="bus" points="939.0,338.4 947.6,338.4 947.6,346.5 939.0,346.5"/>
<polygon class="bus" points="915.7,352.1 924.2,352.1 924.2,360.2 915.7,360.2"/>
<g transform="translate(824.9 351.8)" fill="#734a08"><path d="M-8.6 -4.2L0 -8.4 8.6 -4.2v1.4h-17.2z"/><path d="M-6.8 -1.8h2.9v7h-2.9zM-1.45 -1.8h2.9v7h-2.9zM3.9 -1.8h2.9v7h-2.9z"/><path d="M-8 5.2h16l1.3 2.6h-18.6z"/></g>
<g transform="translate(869.2 338.3)" fill="#734a08"><path d="M-8.6 -4.2L0 -8.4 8.6 -4.2v1.4h-17.2z"/><path d="M-6.8 -1.8h2.9v7h-2.9zM-1.45 -1.8h2.9v7h-2.9zM3.9 -1.8h2.9v7h-2.9z"/><path d="M-8 5.2h16l1.3 2.6h-18.6z"/></g>
<polygon class="brg" points="1146.6,65.0 1150.8,63.0 1154.9,71.8 1150.7,73.7"/>
<text class="Pk" x="1166.0" y="279.9" font-size="21" text-anchor="start">P</text>
<polygon class="bus" points="1165.7,279.1 1168.1,279.1 1168.1,281.6 1165.7,281.6"/></g>
<g id="L-top"><g><rect x="14" y="14.1" width="45" height="86.3" rx="5.5" fill="#000" fill-opacity=".3"/><rect x="16" y="16" width="41.1" height="82.9" rx="3.6" fill="#fff"/><rect x="16" y="56" width="41.1" height="1" fill="#ccc"/><path d="M28.5 36.8h17" stroke="#000" stroke-width="3" fill="none"/><path d="M36.9 29.1v15.8" stroke="#000" stroke-width="3.4" fill="none"/><path d="M29.9 77h14.7" stroke="#000" stroke-width="2.6" fill="none"/></g>
<g transform="translate(590.4 205.8)">
<defs><filter id="mb" x="-50%" y="-50%" width="200%" height="200%"><feGaussianBlur stdDeviation="1.9"/></filter>
<linearGradient id="ms" gradientUnits="userSpaceOnUse" x1="2" y1="-2" x2="30" y2="-30"><stop offset="0" stop-color="#10181c" stop-opacity=".95"/><stop offset=".55" stop-color="#1c262b" stop-opacity=".8"/><stop offset="1" stop-color="#2c3a40" stop-opacity=".15"/></linearGradient>
<linearGradient id="mg" x1="0" y1="0" x2="0" y2="1"><stop offset="0" stop-color="#4a9bd5"/><stop offset="1" stop-color="#2075c2"/></linearGradient></defs>
<path d="M0 0L14 -4.5 25 -12.5 31.5 -22 30 -30 21.5 -32.5 12 -27 3 -12z" fill="url(#ms)" filter="url(#mb)"/>
<path d="M0 0C-3 -10 -16.5 -24 -16.5 -37.5A16.5 16.5 0 0 1 16.5 -37.5C16.5 -24 3 -10 0 0z" fill="url(#mg)" stroke="#2a6cae" stroke-width="1.5" stroke-linejoin="round"/>
<path d="M0 -3.5C-3 -12 -14.8 -25 -14.8 -37.5A14.8 14.8 0 0 1 14.8 -37.5C14.8 -25 3 -12 0 -3.5" fill="none" stroke="#7fbbe6" stroke-opacity=".45" stroke-width="1"/>
<circle cx="0" cy="-38" r="7.4" fill="#2a72b6" fill-opacity=".55"/>
<circle cx="0" cy="-38" r="5.7" fill="#fff"/></g>
<defs><filter id="mmb" x="-5%" y="-5%" width="110%" height="110%"><feGaussianBlur stdDeviation="1.3"/></filter><clipPath id="mmc"><rect x="960" y="170" width="206" height="206"/></clipPath></defs><g clip-path="url(#mmc)"><g filter="url(#mmb)"><rect x="950" y="160" width="226" height="226" fill="#d9d9d9"/>
<polygon points="956.5,166.5 1042.0,166.5 1057.7,187.4 1061.2,204.9 1019.3,229.3 1017.6,239.8 1000.1,253.7 980.9,267.7 956.5,278.1" fill="#d6ecc3" fill-opacity=".75"/>
<polygon points="982.7,180.5 1012.3,177.0 1017.6,196.2 1003.6,210.1 986.2,204.9" fill="#eff1da"/>
<polygon points="1026.3,173.5 1042.0,171.7 1054.2,187.4 1057.7,203.1 1033.3,211.9 1029.8,190.9" fill="#eff1da"/>
<polygon points="963.5,227.6 980.9,222.3 994.9,239.8 987.9,252.0 967.0,248.5" fill="#eff1da"/>
<polygon points="960.0,170.0 970.5,170.0 975.7,185.7 963.5,190.9" fill="#eff1da"/>
<polygon points="1001.9,236.3 1017.6,231.1 1017.6,239.8 1003.6,248.5" fill="#eff1da"/>
<polygon points="970.5,257.2 984.4,253.7 979.2,267.7 967.0,271.2" fill="#eff1da"/>
<polygon points="970.5,190.9 994.9,210.1 1003.6,222.3 991.4,227.6 975.7,210.1" fill="#d6d6d6"/>
<polygon points="1012.3,197.9 1038.5,190.9 1042.0,227.6 1019.3,229.3 1003.6,220.6" fill="#d6d6d6"/>
<polygon points="960.0,211.9 970.5,213.6 968.7,227.6 960.0,227.6" fill="#d6d6d6"/>
<polygon points="991.4,175.2 1012.3,173.5 1014.1,180.5 993.1,182.2" fill="#d6d6d6"/>
<polygon points="1050.7,170.0 1092.6,170.0 1082.1,208.4 1057.7,210.1 1061.2,187.4" fill="#f3f1de"/>
<polygon points="1050.7,170.0 1073.4,170.0 1074.3,184.0 1057.7,186.6" fill="#b9d8aa"/>
<polygon points="1056.8,208.7 1073.4,208.7 1073.4,217.1 1056.8,217.1" fill="#b9d8aa"/>
<polygon points="1096.1,166.5 1169.3,166.5 1169.3,264.2 1134.4,257.2 1106.5,245.0 1089.1,236.3 1075.1,236.3 1082.1,218.8 1089.1,190.9" fill="#d6ecc3"/>
<polygon points="1092.6,187.4 1110.0,190.9 1117.0,204.9 1103.0,215.4 1089.1,210.1" fill="#d6d6d6"/>
<polygon points="1134.4,192.7 1143.2,190.9 1144.9,213.6 1165.8,218.8 1165.8,225.8 1136.2,222.3" fill="#d6d6d6"/>
<polygon points="1117.0,215.4 1144.9,213.6 1146.6,245.0 1118.7,243.3" fill="#eff1da"/>
<polygon points="1137.9,185.7 1169.3,184.0 1169.3,213.6 1146.6,211.9" fill="#eff1da"/>
<polygon points="1104.8,173.5 1127.5,171.7 1125.7,189.2 1110.0,189.2" fill="#eff1da"/>
<polygon points="1144.9,227.6 1169.3,227.6 1169.3,252.0 1148.4,250.2" fill="#eff1da"/>
<polygon points="1113.5,313.0 1130.9,309.5 1132.7,340.9 1117.0,342.7" fill="#d6ecc3"/>
<polygon points="1134.4,281.6 1144.9,279.9 1145.8,302.6 1135.3,302.6" fill="#d6ecc3"/>
<polygon points="1150.1,267.7 1169.3,267.7 1169.3,295.6 1151.9,292.1" fill="#d6ecc3"/>
<polygon points="1117.0,283.4 1124.0,281.6 1125.7,302.6 1118.7,302.6" fill="#eff1da"/>
<polygon points="956.5,292.1 986.2,281.6 994.9,292.1 986.2,318.3 1000.1,344.4 1008.8,379.3 956.5,379.3" fill="#d6ecc3"/>
<polygon points="956.5,340.9 982.7,342.7 984.4,379.3 956.5,379.3" fill="#eff1da"/>
<polygon points="960.0,302.6 977.4,299.1 979.2,316.5 963.5,318.3" fill="#d6d6d6"/>
<polygon points="977.4,281.6 1000.1,278.1 1001.9,290.4 979.2,292.1" fill="#b9d8aa"/>
<polygon points="974.0,295.6 989.7,293.8 989.7,304.3 975.7,306.1" fill="#b9d8aa"/>
<polygon points="1026.3,309.5 1054.2,307.8 1050.7,320.0 1029.8,337.5 1012.3,340.9 1007.1,334.0" fill="#cdf5d2"/>
<polygon points="1057.7,327.0 1082.1,323.5 1085.6,344.4 1064.7,346.2" fill="#d6ecc3"/>
<polygon points="1082.1,361.9 1110.0,365.4 1108.3,379.3 1082.1,379.3" fill="#d6ecc3"/>
<polygon points="1144.9,344.4 1169.3,327.0 1169.3,361.9 1151.9,361.9" fill="#d6ecc3"/>
<polygon points="1122.2,358.4 1134.4,360.1 1130.9,379.3 1117.0,379.3" fill="#d6ecc3"/>
<polygon points="986.2,349.7 1017.6,351.4 1012.3,379.3 982.7,379.3" fill="#b5d6e8"/>
</g>
<polyline points="1092.6,170.0 1082.1,204.9 1064.7,231.1 1055.9,248.5 1055.1,267.7" fill="none" stroke="#bdbdbd" stroke-width="1" stroke-linejoin="round" stroke-linecap="round"/>
<polyline points="1036.7,180.5 1040.2,239.8 1029.8,252.0" fill="none" stroke="#bdbdbd" stroke-width="1" stroke-linejoin="round" stroke-linecap="round"/>
<polyline points="1035.0,241.5 1073.4,239.8 1085.6,246.7 1103.0,246.7" fill="none" stroke="#bdbdbd" stroke-width="1" stroke-linejoin="round" stroke-linecap="round"/>
<polyline points="1008.8,274.7 1029.8,248.5 1035.0,241.5" fill="none" stroke="#bdbdbd" stroke-width="1" stroke-linejoin="round" stroke-linecap="round"/>
<polyline points="1068.1,281.6 1071.6,309.5 1057.7,327.0 1021.1,376.0" fill="none" stroke="#bdbdbd" stroke-width="1" stroke-linejoin="round" stroke-linecap="round"/>
<polyline points="1064.7,302.6 1092.6,344.4 1103.0,361.9" fill="none" stroke="#bdbdbd" stroke-width="1" stroke-linejoin="round" stroke-linecap="round"/>
<polyline points="1085.6,281.6 1134.4,309.5 1151.9,327.0" fill="none" stroke="#bdbdbd" stroke-width="1" stroke-linejoin="round" stroke-linecap="round"/>
<polyline points="960.0,295.6 1005.4,292.1 1042.0,290.4" fill="none" stroke="#bdbdbd" stroke-width="1" stroke-linejoin="round" stroke-linecap="round"/>
<polyline points="1085.6,194.4 1104.8,203.1 1134.4,199.7 1141.4,213.6 1166.0,217.1" fill="none" stroke="#bdbdbd" stroke-width="1" stroke-linejoin="round" stroke-linecap="round"/>
<polyline points="982.7,320.0 994.9,292.1 1008.8,276.4" fill="none" stroke="#bdbdbd" stroke-width="1" stroke-linejoin="round" stroke-linecap="round"/>
<polyline points="1134.4,170.0 1127.5,187.4 1108.3,201.4 1103.0,204.9 1104.8,213.6 1099.5,225.8 1089.1,231.1 1085.6,243.3 1083.8,262.4 1080.4,267.7" fill="none" stroke="#9ccbe0" stroke-width="1.5" stroke-linejoin="round" stroke-linecap="round"/>
<polyline points="1103.0,227.6 1104.8,239.8 1117.0,248.5 1143.2,260.7 1157.1,272.9 1160.6,292.1 1155.4,327.0" fill="none" stroke="#9ccbe0" stroke-width="1.5" stroke-linejoin="round" stroke-linecap="round"/>
<polyline points="1057.7,309.5 1047.2,314.8 1029.8,327.0 1008.8,335.7 1000.1,347.9" fill="none" stroke="#9ccbe0" stroke-width="1.5" stroke-linejoin="round" stroke-linecap="round"/>
<polyline points="1064.7,281.6 1057.7,309.5" fill="none" stroke="#9ccbe0" stroke-width="1.5" stroke-linejoin="round" stroke-linecap="round"/>
<polyline points="1144.9,173.5 1151.9,177.0 1166.0,177.0" fill="none" stroke="#9ccbe0" stroke-width="1.5" stroke-linejoin="round" stroke-linecap="round"/>
<polyline points="1141.4,170.0 1151.9,172.1 1166.0,171.7" fill="none" stroke="#9a7fa8" stroke-width="1.2" stroke-linejoin="round" stroke-linecap="round"/>
<polyline points="1040.2,170.0 1057.7,180.5 1060.3,189.2 1057.7,194.4 1061.2,203.1 1047.2,210.1 1043.7,215.4 1029.8,222.3 1019.3,229.3" fill="none" stroke="#b08fba" stroke-width="1" stroke-linejoin="round" stroke-linecap="round" stroke-dasharray="2.5 1.5"/>
<polyline points="965.2,170.0 972.2,177.0 970.5,189.2 980.9,199.7 994.9,210.1 1003.6,220.6 1017.6,231.1 1019.3,238.0 1008.8,243.3 1005.4,252.0 987.9,252.0 982.7,260.7 977.4,269.4 975.7,278.1 967.0,283.4 960.0,288.6" fill="none" stroke="#b7deaa" stroke-width="4.4" stroke-linejoin="round" stroke-linecap="round"/>
<polyline points="965.2,170.0 972.2,177.0 970.5,189.2 980.9,199.7 994.9,210.1 1003.6,220.6 1017.6,231.1 1019.3,238.0 1008.8,243.3 1005.4,252.0 987.9,252.0 982.7,260.7 977.4,269.4 975.7,278.1 967.0,283.4 960.0,288.6" fill="none" stroke="#629c55" stroke-width="0.9" stroke-linejoin="round" stroke-linecap="round"/>
<polyline points="960.0,299.1 967.0,307.8 963.5,318.3 960.0,321.8" fill="none" stroke="#b7deaa" stroke-width="4.4" stroke-linejoin="round" stroke-linecap="round"/>
<polyline points="960.0,299.1 967.0,307.8 963.5,318.3 960.0,321.8" fill="none" stroke="#629c55" stroke-width="0.9" stroke-linejoin="round" stroke-linecap="round"/>
<polyline points="970.5,337.5 984.4,347.9 998.4,349.7 1007.1,354.9 1001.9,365.4 994.9,376.0" fill="none" stroke="#b7deaa" stroke-width="4.4" stroke-linejoin="round" stroke-linecap="round"/>
<polyline points="970.5,337.5 984.4,347.9 998.4,349.7 1007.1,354.9 1001.9,365.4 994.9,376.0" fill="none" stroke="#629c55" stroke-width="0.9" stroke-linejoin="round" stroke-linecap="round"/>
<polyline points="960.0,184.0 980.9,204.9 994.9,229.3 1008.8,260.7 1019.3,276.4 1033.3,284.3 1050.7,283.4 1082.1,278.1 1134.4,270.3 1166.0,265.9" fill="none" stroke="#747474" stroke-width="1.1" stroke-linejoin="round" stroke-linecap="round"/>
<polyline points="960.0,281.6 986.2,277.3 1008.8,276.4 1021.1,279.0" fill="none" stroke="#8a8a8a" stroke-width="0.8" stroke-linejoin="round" stroke-linecap="round"/>
<polyline points="1064.7,281.6 1073.4,292.1" fill="none" stroke="#777" stroke-width="0.9" stroke-linejoin="round" stroke-linecap="round"/>
<polyline points="1134.4,357.5 1148.4,337.5 1155.4,332.2 1166.0,320.0" fill="none" stroke="#f39a7c" stroke-width="2.2" stroke-linejoin="round" stroke-linecap="round"/>
<polyline points="960.0,320.0 977.4,335.7 1003.6,343.6 1036.7,341.8 1064.7,347.9 1099.5,354.0 1117.0,353.2 1134.4,356.6 1148.4,363.6 1166.0,376.0" fill="none" stroke="#e7738a" stroke-width="3.4" stroke-linejoin="round" stroke-linecap="round"/>
<text x="965.2" y="337.5" font-size="12" font-style="italic" font-weight="bold" fill="#b23a50" stroke="#fff" stroke-opacity=".6" stroke-width="1.4" paint-order="stroke">21</text>
<text x="1035.9" y="347.9" font-size="12" font-style="italic" font-weight="bold" fill="#b23a50" stroke="#fff" stroke-opacity=".6" stroke-width="1.4" paint-order="stroke">22</text>
<text x="1098.7" y="360.1" font-size="12" font-style="italic" font-weight="bold" fill="#b23a50" stroke="#fff" stroke-opacity=".6" stroke-width="1.4" paint-order="stroke">23</text>
<text x="1117.9" y="358.7" font-size="12" font-style="italic" font-weight="bold" fill="#b23a50" stroke="#fff" stroke-opacity=".6" stroke-width="1.4" paint-order="stroke">24</text>
<text x="1139.7" y="358.7" font-size="12" font-style="italic" font-weight="bold" fill="#b23a50" stroke="#fff" stroke-opacity=".6" stroke-width="1.4" paint-order="stroke">24;</text>
<text x="1142.3" y="374.4" font-size="12" font-style="italic" font-weight="bold" fill="#b23a50" stroke="#fff" stroke-opacity=".6" stroke-width="1.4" paint-order="stroke">23</text>
<rect x="1021.9" y="267.7" width="4" height="2.2" fill="#b5ecd0" transform="rotate(-25 1021.9 267.7)"/>
<rect x="1066.4" y="250.2" width="4" height="2.2" fill="#b5ecd0" transform="rotate(-25 1066.4 250.2)"/>
<rect x="1080.4" y="220.6" width="4" height="2.2" fill="#b5ecd0" transform="rotate(-25 1080.4 220.6)"/>
<rect x="1134.4" y="259.0" width="4" height="2.2" fill="#b5ecd0" transform="rotate(-25 1134.4 259.0)"/>
<rect x="1043.7" y="360.1" width="4" height="2.2" fill="#b5ecd0" transform="rotate(-25 1043.7 360.1)"/>
<rect x="1084.7" y="312.2" width="6" height="1.2" fill="#3a8bff"/>
<text x="1005.7" y="303.4" font-size="14" textLength="91" lengthAdjust="spacingAndGlyphs" fill="#505050" stroke="#fff" stroke-opacity=".75" stroke-width="2" paint-order="stroke">Delmenhorst</text><text x="1005.7" y="303.4" font-size="14" textLength="91" lengthAdjust="spacingAndGlyphs" fill="#505050" stroke="#505050" stroke-width=".45">Delmenhorst</text>
<polygon points="1062.0,270.3 1067.3,261.2 1072.5,270.3" fill="#f08c3e"/>
<rect x="1044.9" y="265.6" width="38.0" height="13.4" fill="#ff7800" fill-opacity=".3" stroke="#ff7800" stroke-width="1.5"/></g></g>
</svg>
<div class="attr"><span class="lk">Leaflet</span> | Map data © <span class="lk">OpenStreetMap</span> contributors</div>
</div>
<div class="search"></div>
<div class="in" style="left:35px;top:688px;width:283px;height:41px"></div><div class="in" style="left:334px;top:688px;width:283px;height:41px"></div><div class="in" style="left:632px;top:688px;width:284px;height:41px"></div><div class="in" style="left:931px;top:688px;width:284px;height:41px"></div><div class="in" style="left:35px;top:769px;width:582px;height:41px"></div><div class="in info" style="left:632px;top:769px;width:583px;height:41px"></div><div class="in" style="left:35px;top:850px;width:383px;height:41px"></div><div class="in" style="left:433px;top:850px;width:383px;height:41px"></div><div class="in" style="left:831px;top:850px;width:384px;height:41px"></div><div class="in" style="left:35px;top:931px;width:383px;height:41px"></div><div class="in" style="left:433px;top:931px;width:383px;height:41px"></div><div class="in" style="left:831px;top:931px;width:384px;height:41px"></div><div class="in" style="left:35px;top:1012px;width:1180px;height:41px"></div>
<div class="btn"></div>
<label class="t" style="left:35.6px;top:663.0px;font-size:13px;line-height:16px;font-weight:bold;color:#222426;letter-spacing:-0.40px;">Lat</label><label class="t" style="left:334.0px;top:663.0px;font-size:13px;line-height:16px;font-weight:bold;color:#222426;letter-spacing:-0.71px;">Lng</label><label class="t" style="left:632.4px;top:663.0px;font-size:13px;line-height:16px;font-weight:bold;color:#222426;letter-spacing:-0.09px;">South</label><label class="t" style="left:931.2px;top:663.0px;font-size:13px;line-height:16px;font-weight:bold;color:#222426;letter-spacing:-0.29px;">East</label><label class="t" style="left:35.5px;top:744.0px;font-size:13px;line-height:16px;font-weight:bold;color:#222426;letter-spacing:-0.08px;">Straße</label><label class="t" style="left:632.4px;top:744.0px;font-size:13px;line-height:16px;font-weight:bold;color:#276f86;letter-spacing:0.31px;">Nummer</label><label class="t" style="left:35.5px;top:825.0px;font-size:13px;line-height:16px;font-weight:bold;color:#222426;letter-spacing:-0.35px;">PLZ</label><label class="t" style="left:433.5px;top:825.0px;font-size:13px;line-height:16px;font-weight:bold;color:#222426;letter-spacing:0.33px;">Ort</label><label class="t" style="left:832.0px;top:825.0px;font-size:13px;line-height:16px;font-weight:bold;color:#222426;letter-spacing:0.02px;">Stadtteil</label><label class="t" style="left:35.5px;top:906.0px;font-size:13px;line-height:16px;font-weight:bold;color:#222426;letter-spacing:-0.39px;">Land</label><label class="t" style="left:433.5px;top:906.0px;font-size:13px;line-height:16px;font-weight:bold;color:#222426;letter-spacing:-0.24px;">Bundesland</label><label class="t" style="left:832.0px;top:906.0px;font-size:13px;line-height:16px;font-weight:bold;color:#222426;letter-spacing:-0.26px;">Region</label><label class="t" style="left:35.5px;top:987.0px;font-size:13px;line-height:16px;font-weight:bold;color:#222426;letter-spacing:-0.06px;">Bemerkung</label><div class="t" style="left:51.1px;top:697.8px;font-size:15px;line-height:18px;font-weight:normal;color:#2c2d2e;letter-spacing:0.31px;">53.05580555555600</div><div class="t" style="left:349.5px;top:697.8px;font-size:15px;line-height:18px;font-weight:normal;color:#2c2d2e;letter-spacing:0.29px;">8.63469444444440</div><div class="t" style="left:649.0px;top:697.8px;font-size:15px;line-height:18px;font-weight:normal;color:#2c2d2e;letter-spacing:0.20px;">53°3'20.9"</div><div class="t" style="left:948.0px;top:697.8px;font-size:15px;line-height:18px;font-weight:normal;color:#2c2d2e;letter-spacing:0.16px;">8°38'4.9"</div><div class="t" style="left:51.5px;top:778.8px;font-size:15px;line-height:18px;font-weight:normal;color:#2c2d2e;letter-spacing:0.03px;">Am Wollepark</div><div class="t" style="left:649.0px;top:778.8px;font-size:15px;line-height:18px;font-weight:normal;color:#276f86;letter-spacing:0.00px;">6</div><div class="t" style="left:51.5px;top:859.8px;font-size:15px;line-height:18px;font-weight:normal;color:#2c2d2e;letter-spacing:0.06px;">27749</div><div class="t" style="left:449.0px;top:859.8px;font-size:15px;line-height:18px;font-weight:normal;color:#2c2d2e;letter-spacing:0.09px;">Delmenhorst</div><div class="t" style="left:848.0px;top:859.8px;font-size:15px;line-height:18px;font-weight:normal;color:#2c2d2e;letter-spacing:0.60px;">Mitte</div><div class="t" style="left:51.5px;top:940.8px;font-size:15px;line-height:18px;font-weight:normal;color:#2c2d2e;letter-spacing:-0.13px;">Deutschland</div><div class="t" style="left:449.0px;top:940.8px;font-size:15px;line-height:18px;font-weight:normal;color:#2c2d2e;letter-spacing:-0.24px;">Niedersachsen</div><div class="t" style="left:848.0px;top:940.8px;font-size:15px;line-height:18px;font-weight:normal;color:#2c2d2e;letter-spacing:0.09px;">Delmenhorst</div><div class="t" style="left:51.5px;top:1021.8px;font-size:15px;line-height:18px;font-weight:normal;color:#2c2d2e;letter-spacing:0.18px;">53°03'20.9"N 8°38'04.9"E</div><h2 class="t" style="left:34.6px;top:67.7px;font-size:27.5px;line-height:33px;font-weight:bold;color:#202122;letter-spacing:-0.70px;">Ort Auswählen</h2><div class="t" style="left:61.0px;top:580.3px;font-size:25px;line-height:30px;font-weight:normal;color:#8dcadc;letter-spacing:-1.06px;-webkit-text-stroke:.3px #8dcadc;">Suchen....</div><div class="t" style="left:1105.6px;top:1114.8px;font-size:18.6px;line-height:22px;font-weight:bold;color:#ffffff;letter-spacing:-0.55px;">Speichern</div>
</body></html>
